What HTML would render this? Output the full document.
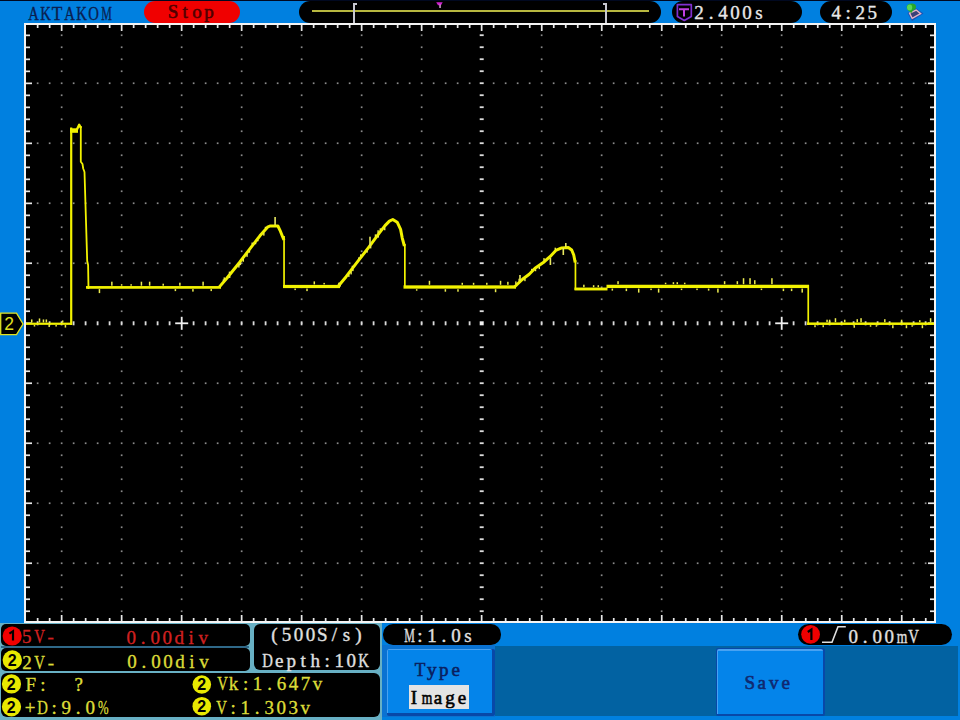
<!DOCTYPE html>
<html><head><meta charset="utf-8">
<style>
html,body{margin:0;padding:0;}
body{width:960px;height:720px;overflow:hidden;position:relative;background:#0080e0;font-family:"Liberation Mono",monospace;}
.a{position:absolute;}
.t{position:absolute;white-space:pre;font-family:"Liberation Serif",serif;font-size:19px;line-height:20px;}
.t span{display:inline-block;width:12px;text-align:center;}
.t{-webkit-text-stroke:0.35px currentColor;}
#stop,#type,#image,#save{-webkit-text-stroke:0.6px currentColor;}
.b{font-weight:bold;}
.pill{position:absolute;background:#000;border-radius:11px;}
</style></head><body>
<div class="a" style="left:0;top:0;width:960px;height:1px;background:#000820"></div>
<div class="pill" style="left:144px;top:1px;width:96px;height:21.5px;background:#f00000"></div>
<div class="pill" style="left:299px;top:1px;width:362px;height:21.5px"></div>
<div class="a" style="left:312px;top:10px;width:337px;height:2px;background:#b8b840"></div>
<div class="a" style="left:353px;top:2.5px;width:2.4px;height:20.5px;background:#c8c8d0"></div>
<div class="a" style="left:353px;top:2.5px;width:3.7px;height:2px;background:#c8c8d0"></div>
<div class="a" style="left:604.7px;top:2.5px;width:2.4px;height:20.5px;background:#c8c8d0"></div>
<div class="a" style="left:603.3px;top:2.5px;width:3.8px;height:2px;background:#c8c8d0"></div>
<svg class="a" style="left:434px;top:1px" width="12" height="8"><path d="M2.2,1.2 H8.7 L7,4.2 H4 Z" fill="#d020d0"/><rect x="5.3" y="3.5" width="1.5" height="3.5" fill="#d0a0d0"/></svg>
<div class="pill" style="left:672px;top:1px;width:130px;height:21.5px"></div>
<svg class="a" style="left:674px;top:2px" width="20" height="20"><path d="M3.4,2.6 H17.3 V14.5 L10.3,18.5 L3.4,14.5 Z" fill="none" stroke="#8030d0" stroke-width="1.7" stroke-linejoin="round"/><path d="M5,7.3 H15 M10,7.3 V14.5" stroke="#c040e0" stroke-width="2" fill="none"/></svg>
<div class="pill" style="left:820px;top:1px;width:72px;height:21.5px"></div>
<svg class="a" style="left:900px;top:0" width="26" height="22"><path d="M7.5,13 L16,8.2 L23.5,13.5 L12,21 Z" fill="#1a52b4"/><path d="M9.6,13.2 L16.2,10 L20.6,13.6 L12.2,18.4 Z" fill="#3a4078" stroke="#e4b4c4" stroke-width="1.4"/><path d="M6.6,6.5 Q8,3.2 12.5,3.6 Q16.5,4.2 16,7.8 Q15.5,10 12.8,10.8 L11.2,13.2 L9.4,11.2 Q6.4,9.6 6.6,6.5 Z" fill="#28a828"/><ellipse cx="9.6" cy="7.6" rx="2.6" ry="3" fill="#58d858"/></svg>

<div class="a" style="left:24px;top:23px;width:912px;height:600px;background:#f4f4f4"></div>
<div class="a" style="left:26px;top:25px;width:908px;height:596px;background:#000"></div>
<svg class="a" style="left:0;top:0" width="960" height="720" viewBox="0 0 960 720">
<rect x="60.8" y="34.4" width="1.7" height="1.7" fill="#8a8a8a"/>
<rect x="60.8" y="46.4" width="1.7" height="1.7" fill="#8a8a8a"/>
<rect x="60.8" y="58.4" width="1.7" height="1.7" fill="#8a8a8a"/>
<rect x="60.8" y="70.4" width="1.7" height="1.7" fill="#8a8a8a"/>
<rect x="60.8" y="82.4" width="1.7" height="1.7" fill="#8a8a8a"/>
<rect x="60.8" y="94.4" width="1.7" height="1.7" fill="#8a8a8a"/>
<rect x="60.8" y="106.4" width="1.7" height="1.7" fill="#8a8a8a"/>
<rect x="60.8" y="118.4" width="1.7" height="1.7" fill="#8a8a8a"/>
<rect x="60.8" y="130.4" width="1.7" height="1.7" fill="#8a8a8a"/>
<rect x="60.8" y="142.4" width="1.7" height="1.7" fill="#8a8a8a"/>
<rect x="60.8" y="154.4" width="1.7" height="1.7" fill="#8a8a8a"/>
<rect x="60.8" y="166.4" width="1.7" height="1.7" fill="#8a8a8a"/>
<rect x="60.8" y="178.4" width="1.7" height="1.7" fill="#8a8a8a"/>
<rect x="60.8" y="190.4" width="1.7" height="1.7" fill="#8a8a8a"/>
<rect x="60.8" y="202.4" width="1.7" height="1.7" fill="#8a8a8a"/>
<rect x="60.8" y="214.4" width="1.7" height="1.7" fill="#8a8a8a"/>
<rect x="60.8" y="226.4" width="1.7" height="1.7" fill="#8a8a8a"/>
<rect x="60.8" y="238.4" width="1.7" height="1.7" fill="#8a8a8a"/>
<rect x="60.8" y="250.4" width="1.7" height="1.7" fill="#8a8a8a"/>
<rect x="60.8" y="262.4" width="1.7" height="1.7" fill="#8a8a8a"/>
<rect x="60.8" y="274.4" width="1.7" height="1.7" fill="#8a8a8a"/>
<rect x="60.8" y="286.4" width="1.7" height="1.7" fill="#8a8a8a"/>
<rect x="60.8" y="298.4" width="1.7" height="1.7" fill="#8a8a8a"/>
<rect x="60.8" y="310.4" width="1.7" height="1.7" fill="#8a8a8a"/>
<rect x="60.8" y="322.4" width="1.7" height="1.7" fill="#8a8a8a"/>
<rect x="60.8" y="334.4" width="1.7" height="1.7" fill="#8a8a8a"/>
<rect x="60.8" y="346.4" width="1.7" height="1.7" fill="#8a8a8a"/>
<rect x="60.8" y="358.4" width="1.7" height="1.7" fill="#8a8a8a"/>
<rect x="60.8" y="370.4" width="1.7" height="1.7" fill="#8a8a8a"/>
<rect x="60.8" y="382.4" width="1.7" height="1.7" fill="#8a8a8a"/>
<rect x="60.8" y="394.4" width="1.7" height="1.7" fill="#8a8a8a"/>
<rect x="60.8" y="406.4" width="1.7" height="1.7" fill="#8a8a8a"/>
<rect x="60.8" y="418.4" width="1.7" height="1.7" fill="#8a8a8a"/>
<rect x="60.8" y="430.4" width="1.7" height="1.7" fill="#8a8a8a"/>
<rect x="60.8" y="442.4" width="1.7" height="1.7" fill="#8a8a8a"/>
<rect x="60.8" y="454.4" width="1.7" height="1.7" fill="#8a8a8a"/>
<rect x="60.8" y="466.4" width="1.7" height="1.7" fill="#8a8a8a"/>
<rect x="60.8" y="478.4" width="1.7" height="1.7" fill="#8a8a8a"/>
<rect x="60.8" y="490.4" width="1.7" height="1.7" fill="#8a8a8a"/>
<rect x="60.8" y="502.4" width="1.7" height="1.7" fill="#8a8a8a"/>
<rect x="60.8" y="514.4" width="1.7" height="1.7" fill="#8a8a8a"/>
<rect x="60.8" y="526.4" width="1.7" height="1.7" fill="#8a8a8a"/>
<rect x="60.8" y="538.4" width="1.7" height="1.7" fill="#8a8a8a"/>
<rect x="60.8" y="550.4" width="1.7" height="1.7" fill="#8a8a8a"/>
<rect x="60.8" y="562.4" width="1.7" height="1.7" fill="#8a8a8a"/>
<rect x="60.8" y="574.4" width="1.7" height="1.7" fill="#8a8a8a"/>
<rect x="60.8" y="586.4" width="1.7" height="1.7" fill="#8a8a8a"/>
<rect x="60.8" y="598.4" width="1.7" height="1.7" fill="#8a8a8a"/>
<rect x="60.8" y="610.4" width="1.7" height="1.7" fill="#8a8a8a"/>
<rect x="120.8" y="34.4" width="1.7" height="1.7" fill="#8a8a8a"/>
<rect x="120.8" y="46.4" width="1.7" height="1.7" fill="#8a8a8a"/>
<rect x="120.8" y="58.4" width="1.7" height="1.7" fill="#8a8a8a"/>
<rect x="120.8" y="70.4" width="1.7" height="1.7" fill="#8a8a8a"/>
<rect x="120.8" y="82.4" width="1.7" height="1.7" fill="#8a8a8a"/>
<rect x="120.8" y="94.4" width="1.7" height="1.7" fill="#8a8a8a"/>
<rect x="120.8" y="106.4" width="1.7" height="1.7" fill="#8a8a8a"/>
<rect x="120.8" y="118.4" width="1.7" height="1.7" fill="#8a8a8a"/>
<rect x="120.8" y="130.4" width="1.7" height="1.7" fill="#8a8a8a"/>
<rect x="120.8" y="142.4" width="1.7" height="1.7" fill="#8a8a8a"/>
<rect x="120.8" y="154.4" width="1.7" height="1.7" fill="#8a8a8a"/>
<rect x="120.8" y="166.4" width="1.7" height="1.7" fill="#8a8a8a"/>
<rect x="120.8" y="178.4" width="1.7" height="1.7" fill="#8a8a8a"/>
<rect x="120.8" y="190.4" width="1.7" height="1.7" fill="#8a8a8a"/>
<rect x="120.8" y="202.4" width="1.7" height="1.7" fill="#8a8a8a"/>
<rect x="120.8" y="214.4" width="1.7" height="1.7" fill="#8a8a8a"/>
<rect x="120.8" y="226.4" width="1.7" height="1.7" fill="#8a8a8a"/>
<rect x="120.8" y="238.4" width="1.7" height="1.7" fill="#8a8a8a"/>
<rect x="120.8" y="250.4" width="1.7" height="1.7" fill="#8a8a8a"/>
<rect x="120.8" y="262.4" width="1.7" height="1.7" fill="#8a8a8a"/>
<rect x="120.8" y="274.4" width="1.7" height="1.7" fill="#8a8a8a"/>
<rect x="120.8" y="286.4" width="1.7" height="1.7" fill="#8a8a8a"/>
<rect x="120.8" y="298.4" width="1.7" height="1.7" fill="#8a8a8a"/>
<rect x="120.8" y="310.4" width="1.7" height="1.7" fill="#8a8a8a"/>
<rect x="120.8" y="322.4" width="1.7" height="1.7" fill="#8a8a8a"/>
<rect x="120.8" y="334.4" width="1.7" height="1.7" fill="#8a8a8a"/>
<rect x="120.8" y="346.4" width="1.7" height="1.7" fill="#8a8a8a"/>
<rect x="120.8" y="358.4" width="1.7" height="1.7" fill="#8a8a8a"/>
<rect x="120.8" y="370.4" width="1.7" height="1.7" fill="#8a8a8a"/>
<rect x="120.8" y="382.4" width="1.7" height="1.7" fill="#8a8a8a"/>
<rect x="120.8" y="394.4" width="1.7" height="1.7" fill="#8a8a8a"/>
<rect x="120.8" y="406.4" width="1.7" height="1.7" fill="#8a8a8a"/>
<rect x="120.8" y="418.4" width="1.7" height="1.7" fill="#8a8a8a"/>
<rect x="120.8" y="430.4" width="1.7" height="1.7" fill="#8a8a8a"/>
<rect x="120.8" y="442.4" width="1.7" height="1.7" fill="#8a8a8a"/>
<rect x="120.8" y="454.4" width="1.7" height="1.7" fill="#8a8a8a"/>
<rect x="120.8" y="466.4" width="1.7" height="1.7" fill="#8a8a8a"/>
<rect x="120.8" y="478.4" width="1.7" height="1.7" fill="#8a8a8a"/>
<rect x="120.8" y="490.4" width="1.7" height="1.7" fill="#8a8a8a"/>
<rect x="120.8" y="502.4" width="1.7" height="1.7" fill="#8a8a8a"/>
<rect x="120.8" y="514.4" width="1.7" height="1.7" fill="#8a8a8a"/>
<rect x="120.8" y="526.4" width="1.7" height="1.7" fill="#8a8a8a"/>
<rect x="120.8" y="538.4" width="1.7" height="1.7" fill="#8a8a8a"/>
<rect x="120.8" y="550.4" width="1.7" height="1.7" fill="#8a8a8a"/>
<rect x="120.8" y="562.4" width="1.7" height="1.7" fill="#8a8a8a"/>
<rect x="120.8" y="574.4" width="1.7" height="1.7" fill="#8a8a8a"/>
<rect x="120.8" y="586.4" width="1.7" height="1.7" fill="#8a8a8a"/>
<rect x="120.8" y="598.4" width="1.7" height="1.7" fill="#8a8a8a"/>
<rect x="120.8" y="610.4" width="1.7" height="1.7" fill="#8a8a8a"/>
<rect x="180.8" y="34.4" width="1.7" height="1.7" fill="#8a8a8a"/>
<rect x="180.8" y="46.4" width="1.7" height="1.7" fill="#8a8a8a"/>
<rect x="180.8" y="58.4" width="1.7" height="1.7" fill="#8a8a8a"/>
<rect x="180.8" y="70.4" width="1.7" height="1.7" fill="#8a8a8a"/>
<rect x="180.8" y="82.4" width="1.7" height="1.7" fill="#8a8a8a"/>
<rect x="180.8" y="94.4" width="1.7" height="1.7" fill="#8a8a8a"/>
<rect x="180.8" y="106.4" width="1.7" height="1.7" fill="#8a8a8a"/>
<rect x="180.8" y="118.4" width="1.7" height="1.7" fill="#8a8a8a"/>
<rect x="180.8" y="130.4" width="1.7" height="1.7" fill="#8a8a8a"/>
<rect x="180.8" y="142.4" width="1.7" height="1.7" fill="#8a8a8a"/>
<rect x="180.8" y="154.4" width="1.7" height="1.7" fill="#8a8a8a"/>
<rect x="180.8" y="166.4" width="1.7" height="1.7" fill="#8a8a8a"/>
<rect x="180.8" y="178.4" width="1.7" height="1.7" fill="#8a8a8a"/>
<rect x="180.8" y="190.4" width="1.7" height="1.7" fill="#8a8a8a"/>
<rect x="180.8" y="202.4" width="1.7" height="1.7" fill="#8a8a8a"/>
<rect x="180.8" y="214.4" width="1.7" height="1.7" fill="#8a8a8a"/>
<rect x="180.8" y="226.4" width="1.7" height="1.7" fill="#8a8a8a"/>
<rect x="180.8" y="238.4" width="1.7" height="1.7" fill="#8a8a8a"/>
<rect x="180.8" y="250.4" width="1.7" height="1.7" fill="#8a8a8a"/>
<rect x="180.8" y="262.4" width="1.7" height="1.7" fill="#8a8a8a"/>
<rect x="180.8" y="274.4" width="1.7" height="1.7" fill="#8a8a8a"/>
<rect x="180.8" y="286.4" width="1.7" height="1.7" fill="#8a8a8a"/>
<rect x="180.8" y="298.4" width="1.7" height="1.7" fill="#8a8a8a"/>
<rect x="180.8" y="310.4" width="1.7" height="1.7" fill="#8a8a8a"/>
<rect x="180.8" y="322.4" width="1.7" height="1.7" fill="#8a8a8a"/>
<rect x="180.8" y="334.4" width="1.7" height="1.7" fill="#8a8a8a"/>
<rect x="180.8" y="346.4" width="1.7" height="1.7" fill="#8a8a8a"/>
<rect x="180.8" y="358.4" width="1.7" height="1.7" fill="#8a8a8a"/>
<rect x="180.8" y="370.4" width="1.7" height="1.7" fill="#8a8a8a"/>
<rect x="180.8" y="382.4" width="1.7" height="1.7" fill="#8a8a8a"/>
<rect x="180.8" y="394.4" width="1.7" height="1.7" fill="#8a8a8a"/>
<rect x="180.8" y="406.4" width="1.7" height="1.7" fill="#8a8a8a"/>
<rect x="180.8" y="418.4" width="1.7" height="1.7" fill="#8a8a8a"/>
<rect x="180.8" y="430.4" width="1.7" height="1.7" fill="#8a8a8a"/>
<rect x="180.8" y="442.4" width="1.7" height="1.7" fill="#8a8a8a"/>
<rect x="180.8" y="454.4" width="1.7" height="1.7" fill="#8a8a8a"/>
<rect x="180.8" y="466.4" width="1.7" height="1.7" fill="#8a8a8a"/>
<rect x="180.8" y="478.4" width="1.7" height="1.7" fill="#8a8a8a"/>
<rect x="180.8" y="490.4" width="1.7" height="1.7" fill="#8a8a8a"/>
<rect x="180.8" y="502.4" width="1.7" height="1.7" fill="#8a8a8a"/>
<rect x="180.8" y="514.4" width="1.7" height="1.7" fill="#8a8a8a"/>
<rect x="180.8" y="526.4" width="1.7" height="1.7" fill="#8a8a8a"/>
<rect x="180.8" y="538.4" width="1.7" height="1.7" fill="#8a8a8a"/>
<rect x="180.8" y="550.4" width="1.7" height="1.7" fill="#8a8a8a"/>
<rect x="180.8" y="562.4" width="1.7" height="1.7" fill="#8a8a8a"/>
<rect x="180.8" y="574.4" width="1.7" height="1.7" fill="#8a8a8a"/>
<rect x="180.8" y="586.4" width="1.7" height="1.7" fill="#8a8a8a"/>
<rect x="180.8" y="598.4" width="1.7" height="1.7" fill="#8a8a8a"/>
<rect x="180.8" y="610.4" width="1.7" height="1.7" fill="#8a8a8a"/>
<rect x="240.8" y="34.4" width="1.7" height="1.7" fill="#8a8a8a"/>
<rect x="240.8" y="46.4" width="1.7" height="1.7" fill="#8a8a8a"/>
<rect x="240.8" y="58.4" width="1.7" height="1.7" fill="#8a8a8a"/>
<rect x="240.8" y="70.4" width="1.7" height="1.7" fill="#8a8a8a"/>
<rect x="240.8" y="82.4" width="1.7" height="1.7" fill="#8a8a8a"/>
<rect x="240.8" y="94.4" width="1.7" height="1.7" fill="#8a8a8a"/>
<rect x="240.8" y="106.4" width="1.7" height="1.7" fill="#8a8a8a"/>
<rect x="240.8" y="118.4" width="1.7" height="1.7" fill="#8a8a8a"/>
<rect x="240.8" y="130.4" width="1.7" height="1.7" fill="#8a8a8a"/>
<rect x="240.8" y="142.4" width="1.7" height="1.7" fill="#8a8a8a"/>
<rect x="240.8" y="154.4" width="1.7" height="1.7" fill="#8a8a8a"/>
<rect x="240.8" y="166.4" width="1.7" height="1.7" fill="#8a8a8a"/>
<rect x="240.8" y="178.4" width="1.7" height="1.7" fill="#8a8a8a"/>
<rect x="240.8" y="190.4" width="1.7" height="1.7" fill="#8a8a8a"/>
<rect x="240.8" y="202.4" width="1.7" height="1.7" fill="#8a8a8a"/>
<rect x="240.8" y="214.4" width="1.7" height="1.7" fill="#8a8a8a"/>
<rect x="240.8" y="226.4" width="1.7" height="1.7" fill="#8a8a8a"/>
<rect x="240.8" y="238.4" width="1.7" height="1.7" fill="#8a8a8a"/>
<rect x="240.8" y="250.4" width="1.7" height="1.7" fill="#8a8a8a"/>
<rect x="240.8" y="262.4" width="1.7" height="1.7" fill="#8a8a8a"/>
<rect x="240.8" y="274.4" width="1.7" height="1.7" fill="#8a8a8a"/>
<rect x="240.8" y="286.4" width="1.7" height="1.7" fill="#8a8a8a"/>
<rect x="240.8" y="298.4" width="1.7" height="1.7" fill="#8a8a8a"/>
<rect x="240.8" y="310.4" width="1.7" height="1.7" fill="#8a8a8a"/>
<rect x="240.8" y="322.4" width="1.7" height="1.7" fill="#8a8a8a"/>
<rect x="240.8" y="334.4" width="1.7" height="1.7" fill="#8a8a8a"/>
<rect x="240.8" y="346.4" width="1.7" height="1.7" fill="#8a8a8a"/>
<rect x="240.8" y="358.4" width="1.7" height="1.7" fill="#8a8a8a"/>
<rect x="240.8" y="370.4" width="1.7" height="1.7" fill="#8a8a8a"/>
<rect x="240.8" y="382.4" width="1.7" height="1.7" fill="#8a8a8a"/>
<rect x="240.8" y="394.4" width="1.7" height="1.7" fill="#8a8a8a"/>
<rect x="240.8" y="406.4" width="1.7" height="1.7" fill="#8a8a8a"/>
<rect x="240.8" y="418.4" width="1.7" height="1.7" fill="#8a8a8a"/>
<rect x="240.8" y="430.4" width="1.7" height="1.7" fill="#8a8a8a"/>
<rect x="240.8" y="442.4" width="1.7" height="1.7" fill="#8a8a8a"/>
<rect x="240.8" y="454.4" width="1.7" height="1.7" fill="#8a8a8a"/>
<rect x="240.8" y="466.4" width="1.7" height="1.7" fill="#8a8a8a"/>
<rect x="240.8" y="478.4" width="1.7" height="1.7" fill="#8a8a8a"/>
<rect x="240.8" y="490.4" width="1.7" height="1.7" fill="#8a8a8a"/>
<rect x="240.8" y="502.4" width="1.7" height="1.7" fill="#8a8a8a"/>
<rect x="240.8" y="514.4" width="1.7" height="1.7" fill="#8a8a8a"/>
<rect x="240.8" y="526.4" width="1.7" height="1.7" fill="#8a8a8a"/>
<rect x="240.8" y="538.4" width="1.7" height="1.7" fill="#8a8a8a"/>
<rect x="240.8" y="550.4" width="1.7" height="1.7" fill="#8a8a8a"/>
<rect x="240.8" y="562.4" width="1.7" height="1.7" fill="#8a8a8a"/>
<rect x="240.8" y="574.4" width="1.7" height="1.7" fill="#8a8a8a"/>
<rect x="240.8" y="586.4" width="1.7" height="1.7" fill="#8a8a8a"/>
<rect x="240.8" y="598.4" width="1.7" height="1.7" fill="#8a8a8a"/>
<rect x="240.8" y="610.4" width="1.7" height="1.7" fill="#8a8a8a"/>
<rect x="300.8" y="34.4" width="1.7" height="1.7" fill="#8a8a8a"/>
<rect x="300.8" y="46.4" width="1.7" height="1.7" fill="#8a8a8a"/>
<rect x="300.8" y="58.4" width="1.7" height="1.7" fill="#8a8a8a"/>
<rect x="300.8" y="70.4" width="1.7" height="1.7" fill="#8a8a8a"/>
<rect x="300.8" y="82.4" width="1.7" height="1.7" fill="#8a8a8a"/>
<rect x="300.8" y="94.4" width="1.7" height="1.7" fill="#8a8a8a"/>
<rect x="300.8" y="106.4" width="1.7" height="1.7" fill="#8a8a8a"/>
<rect x="300.8" y="118.4" width="1.7" height="1.7" fill="#8a8a8a"/>
<rect x="300.8" y="130.4" width="1.7" height="1.7" fill="#8a8a8a"/>
<rect x="300.8" y="142.4" width="1.7" height="1.7" fill="#8a8a8a"/>
<rect x="300.8" y="154.4" width="1.7" height="1.7" fill="#8a8a8a"/>
<rect x="300.8" y="166.4" width="1.7" height="1.7" fill="#8a8a8a"/>
<rect x="300.8" y="178.4" width="1.7" height="1.7" fill="#8a8a8a"/>
<rect x="300.8" y="190.4" width="1.7" height="1.7" fill="#8a8a8a"/>
<rect x="300.8" y="202.4" width="1.7" height="1.7" fill="#8a8a8a"/>
<rect x="300.8" y="214.4" width="1.7" height="1.7" fill="#8a8a8a"/>
<rect x="300.8" y="226.4" width="1.7" height="1.7" fill="#8a8a8a"/>
<rect x="300.8" y="238.4" width="1.7" height="1.7" fill="#8a8a8a"/>
<rect x="300.8" y="250.4" width="1.7" height="1.7" fill="#8a8a8a"/>
<rect x="300.8" y="262.4" width="1.7" height="1.7" fill="#8a8a8a"/>
<rect x="300.8" y="274.4" width="1.7" height="1.7" fill="#8a8a8a"/>
<rect x="300.8" y="286.4" width="1.7" height="1.7" fill="#8a8a8a"/>
<rect x="300.8" y="298.4" width="1.7" height="1.7" fill="#8a8a8a"/>
<rect x="300.8" y="310.4" width="1.7" height="1.7" fill="#8a8a8a"/>
<rect x="300.8" y="322.4" width="1.7" height="1.7" fill="#8a8a8a"/>
<rect x="300.8" y="334.4" width="1.7" height="1.7" fill="#8a8a8a"/>
<rect x="300.8" y="346.4" width="1.7" height="1.7" fill="#8a8a8a"/>
<rect x="300.8" y="358.4" width="1.7" height="1.7" fill="#8a8a8a"/>
<rect x="300.8" y="370.4" width="1.7" height="1.7" fill="#8a8a8a"/>
<rect x="300.8" y="382.4" width="1.7" height="1.7" fill="#8a8a8a"/>
<rect x="300.8" y="394.4" width="1.7" height="1.7" fill="#8a8a8a"/>
<rect x="300.8" y="406.4" width="1.7" height="1.7" fill="#8a8a8a"/>
<rect x="300.8" y="418.4" width="1.7" height="1.7" fill="#8a8a8a"/>
<rect x="300.8" y="430.4" width="1.7" height="1.7" fill="#8a8a8a"/>
<rect x="300.8" y="442.4" width="1.7" height="1.7" fill="#8a8a8a"/>
<rect x="300.8" y="454.4" width="1.7" height="1.7" fill="#8a8a8a"/>
<rect x="300.8" y="466.4" width="1.7" height="1.7" fill="#8a8a8a"/>
<rect x="300.8" y="478.4" width="1.7" height="1.7" fill="#8a8a8a"/>
<rect x="300.8" y="490.4" width="1.7" height="1.7" fill="#8a8a8a"/>
<rect x="300.8" y="502.4" width="1.7" height="1.7" fill="#8a8a8a"/>
<rect x="300.8" y="514.4" width="1.7" height="1.7" fill="#8a8a8a"/>
<rect x="300.8" y="526.4" width="1.7" height="1.7" fill="#8a8a8a"/>
<rect x="300.8" y="538.4" width="1.7" height="1.7" fill="#8a8a8a"/>
<rect x="300.8" y="550.4" width="1.7" height="1.7" fill="#8a8a8a"/>
<rect x="300.8" y="562.4" width="1.7" height="1.7" fill="#8a8a8a"/>
<rect x="300.8" y="574.4" width="1.7" height="1.7" fill="#8a8a8a"/>
<rect x="300.8" y="586.4" width="1.7" height="1.7" fill="#8a8a8a"/>
<rect x="300.8" y="598.4" width="1.7" height="1.7" fill="#8a8a8a"/>
<rect x="300.8" y="610.4" width="1.7" height="1.7" fill="#8a8a8a"/>
<rect x="360.8" y="34.4" width="1.7" height="1.7" fill="#8a8a8a"/>
<rect x="360.8" y="46.4" width="1.7" height="1.7" fill="#8a8a8a"/>
<rect x="360.8" y="58.4" width="1.7" height="1.7" fill="#8a8a8a"/>
<rect x="360.8" y="70.4" width="1.7" height="1.7" fill="#8a8a8a"/>
<rect x="360.8" y="82.4" width="1.7" height="1.7" fill="#8a8a8a"/>
<rect x="360.8" y="94.4" width="1.7" height="1.7" fill="#8a8a8a"/>
<rect x="360.8" y="106.4" width="1.7" height="1.7" fill="#8a8a8a"/>
<rect x="360.8" y="118.4" width="1.7" height="1.7" fill="#8a8a8a"/>
<rect x="360.8" y="130.4" width="1.7" height="1.7" fill="#8a8a8a"/>
<rect x="360.8" y="142.4" width="1.7" height="1.7" fill="#8a8a8a"/>
<rect x="360.8" y="154.4" width="1.7" height="1.7" fill="#8a8a8a"/>
<rect x="360.8" y="166.4" width="1.7" height="1.7" fill="#8a8a8a"/>
<rect x="360.8" y="178.4" width="1.7" height="1.7" fill="#8a8a8a"/>
<rect x="360.8" y="190.4" width="1.7" height="1.7" fill="#8a8a8a"/>
<rect x="360.8" y="202.4" width="1.7" height="1.7" fill="#8a8a8a"/>
<rect x="360.8" y="214.4" width="1.7" height="1.7" fill="#8a8a8a"/>
<rect x="360.8" y="226.4" width="1.7" height="1.7" fill="#8a8a8a"/>
<rect x="360.8" y="238.4" width="1.7" height="1.7" fill="#8a8a8a"/>
<rect x="360.8" y="250.4" width="1.7" height="1.7" fill="#8a8a8a"/>
<rect x="360.8" y="262.4" width="1.7" height="1.7" fill="#8a8a8a"/>
<rect x="360.8" y="274.4" width="1.7" height="1.7" fill="#8a8a8a"/>
<rect x="360.8" y="286.4" width="1.7" height="1.7" fill="#8a8a8a"/>
<rect x="360.8" y="298.4" width="1.7" height="1.7" fill="#8a8a8a"/>
<rect x="360.8" y="310.4" width="1.7" height="1.7" fill="#8a8a8a"/>
<rect x="360.8" y="322.4" width="1.7" height="1.7" fill="#8a8a8a"/>
<rect x="360.8" y="334.4" width="1.7" height="1.7" fill="#8a8a8a"/>
<rect x="360.8" y="346.4" width="1.7" height="1.7" fill="#8a8a8a"/>
<rect x="360.8" y="358.4" width="1.7" height="1.7" fill="#8a8a8a"/>
<rect x="360.8" y="370.4" width="1.7" height="1.7" fill="#8a8a8a"/>
<rect x="360.8" y="382.4" width="1.7" height="1.7" fill="#8a8a8a"/>
<rect x="360.8" y="394.4" width="1.7" height="1.7" fill="#8a8a8a"/>
<rect x="360.8" y="406.4" width="1.7" height="1.7" fill="#8a8a8a"/>
<rect x="360.8" y="418.4" width="1.7" height="1.7" fill="#8a8a8a"/>
<rect x="360.8" y="430.4" width="1.7" height="1.7" fill="#8a8a8a"/>
<rect x="360.8" y="442.4" width="1.7" height="1.7" fill="#8a8a8a"/>
<rect x="360.8" y="454.4" width="1.7" height="1.7" fill="#8a8a8a"/>
<rect x="360.8" y="466.4" width="1.7" height="1.7" fill="#8a8a8a"/>
<rect x="360.8" y="478.4" width="1.7" height="1.7" fill="#8a8a8a"/>
<rect x="360.8" y="490.4" width="1.7" height="1.7" fill="#8a8a8a"/>
<rect x="360.8" y="502.4" width="1.7" height="1.7" fill="#8a8a8a"/>
<rect x="360.8" y="514.4" width="1.7" height="1.7" fill="#8a8a8a"/>
<rect x="360.8" y="526.4" width="1.7" height="1.7" fill="#8a8a8a"/>
<rect x="360.8" y="538.4" width="1.7" height="1.7" fill="#8a8a8a"/>
<rect x="360.8" y="550.4" width="1.7" height="1.7" fill="#8a8a8a"/>
<rect x="360.8" y="562.4" width="1.7" height="1.7" fill="#8a8a8a"/>
<rect x="360.8" y="574.4" width="1.7" height="1.7" fill="#8a8a8a"/>
<rect x="360.8" y="586.4" width="1.7" height="1.7" fill="#8a8a8a"/>
<rect x="360.8" y="598.4" width="1.7" height="1.7" fill="#8a8a8a"/>
<rect x="360.8" y="610.4" width="1.7" height="1.7" fill="#8a8a8a"/>
<rect x="420.8" y="34.4" width="1.7" height="1.7" fill="#8a8a8a"/>
<rect x="420.8" y="46.4" width="1.7" height="1.7" fill="#8a8a8a"/>
<rect x="420.8" y="58.4" width="1.7" height="1.7" fill="#8a8a8a"/>
<rect x="420.8" y="70.4" width="1.7" height="1.7" fill="#8a8a8a"/>
<rect x="420.8" y="82.4" width="1.7" height="1.7" fill="#8a8a8a"/>
<rect x="420.8" y="94.4" width="1.7" height="1.7" fill="#8a8a8a"/>
<rect x="420.8" y="106.4" width="1.7" height="1.7" fill="#8a8a8a"/>
<rect x="420.8" y="118.4" width="1.7" height="1.7" fill="#8a8a8a"/>
<rect x="420.8" y="130.4" width="1.7" height="1.7" fill="#8a8a8a"/>
<rect x="420.8" y="142.4" width="1.7" height="1.7" fill="#8a8a8a"/>
<rect x="420.8" y="154.4" width="1.7" height="1.7" fill="#8a8a8a"/>
<rect x="420.8" y="166.4" width="1.7" height="1.7" fill="#8a8a8a"/>
<rect x="420.8" y="178.4" width="1.7" height="1.7" fill="#8a8a8a"/>
<rect x="420.8" y="190.4" width="1.7" height="1.7" fill="#8a8a8a"/>
<rect x="420.8" y="202.4" width="1.7" height="1.7" fill="#8a8a8a"/>
<rect x="420.8" y="214.4" width="1.7" height="1.7" fill="#8a8a8a"/>
<rect x="420.8" y="226.4" width="1.7" height="1.7" fill="#8a8a8a"/>
<rect x="420.8" y="238.4" width="1.7" height="1.7" fill="#8a8a8a"/>
<rect x="420.8" y="250.4" width="1.7" height="1.7" fill="#8a8a8a"/>
<rect x="420.8" y="262.4" width="1.7" height="1.7" fill="#8a8a8a"/>
<rect x="420.8" y="274.4" width="1.7" height="1.7" fill="#8a8a8a"/>
<rect x="420.8" y="286.4" width="1.7" height="1.7" fill="#8a8a8a"/>
<rect x="420.8" y="298.4" width="1.7" height="1.7" fill="#8a8a8a"/>
<rect x="420.8" y="310.4" width="1.7" height="1.7" fill="#8a8a8a"/>
<rect x="420.8" y="322.4" width="1.7" height="1.7" fill="#8a8a8a"/>
<rect x="420.8" y="334.4" width="1.7" height="1.7" fill="#8a8a8a"/>
<rect x="420.8" y="346.4" width="1.7" height="1.7" fill="#8a8a8a"/>
<rect x="420.8" y="358.4" width="1.7" height="1.7" fill="#8a8a8a"/>
<rect x="420.8" y="370.4" width="1.7" height="1.7" fill="#8a8a8a"/>
<rect x="420.8" y="382.4" width="1.7" height="1.7" fill="#8a8a8a"/>
<rect x="420.8" y="394.4" width="1.7" height="1.7" fill="#8a8a8a"/>
<rect x="420.8" y="406.4" width="1.7" height="1.7" fill="#8a8a8a"/>
<rect x="420.8" y="418.4" width="1.7" height="1.7" fill="#8a8a8a"/>
<rect x="420.8" y="430.4" width="1.7" height="1.7" fill="#8a8a8a"/>
<rect x="420.8" y="442.4" width="1.7" height="1.7" fill="#8a8a8a"/>
<rect x="420.8" y="454.4" width="1.7" height="1.7" fill="#8a8a8a"/>
<rect x="420.8" y="466.4" width="1.7" height="1.7" fill="#8a8a8a"/>
<rect x="420.8" y="478.4" width="1.7" height="1.7" fill="#8a8a8a"/>
<rect x="420.8" y="490.4" width="1.7" height="1.7" fill="#8a8a8a"/>
<rect x="420.8" y="502.4" width="1.7" height="1.7" fill="#8a8a8a"/>
<rect x="420.8" y="514.4" width="1.7" height="1.7" fill="#8a8a8a"/>
<rect x="420.8" y="526.4" width="1.7" height="1.7" fill="#8a8a8a"/>
<rect x="420.8" y="538.4" width="1.7" height="1.7" fill="#8a8a8a"/>
<rect x="420.8" y="550.4" width="1.7" height="1.7" fill="#8a8a8a"/>
<rect x="420.8" y="562.4" width="1.7" height="1.7" fill="#8a8a8a"/>
<rect x="420.8" y="574.4" width="1.7" height="1.7" fill="#8a8a8a"/>
<rect x="420.8" y="586.4" width="1.7" height="1.7" fill="#8a8a8a"/>
<rect x="420.8" y="598.4" width="1.7" height="1.7" fill="#8a8a8a"/>
<rect x="420.8" y="610.4" width="1.7" height="1.7" fill="#8a8a8a"/>
<rect x="540.8" y="34.4" width="1.7" height="1.7" fill="#8a8a8a"/>
<rect x="540.8" y="46.4" width="1.7" height="1.7" fill="#8a8a8a"/>
<rect x="540.8" y="58.4" width="1.7" height="1.7" fill="#8a8a8a"/>
<rect x="540.8" y="70.4" width="1.7" height="1.7" fill="#8a8a8a"/>
<rect x="540.8" y="82.4" width="1.7" height="1.7" fill="#8a8a8a"/>
<rect x="540.8" y="94.4" width="1.7" height="1.7" fill="#8a8a8a"/>
<rect x="540.8" y="106.4" width="1.7" height="1.7" fill="#8a8a8a"/>
<rect x="540.8" y="118.4" width="1.7" height="1.7" fill="#8a8a8a"/>
<rect x="540.8" y="130.4" width="1.7" height="1.7" fill="#8a8a8a"/>
<rect x="540.8" y="142.4" width="1.7" height="1.7" fill="#8a8a8a"/>
<rect x="540.8" y="154.4" width="1.7" height="1.7" fill="#8a8a8a"/>
<rect x="540.8" y="166.4" width="1.7" height="1.7" fill="#8a8a8a"/>
<rect x="540.8" y="178.4" width="1.7" height="1.7" fill="#8a8a8a"/>
<rect x="540.8" y="190.4" width="1.7" height="1.7" fill="#8a8a8a"/>
<rect x="540.8" y="202.4" width="1.7" height="1.7" fill="#8a8a8a"/>
<rect x="540.8" y="214.4" width="1.7" height="1.7" fill="#8a8a8a"/>
<rect x="540.8" y="226.4" width="1.7" height="1.7" fill="#8a8a8a"/>
<rect x="540.8" y="238.4" width="1.7" height="1.7" fill="#8a8a8a"/>
<rect x="540.8" y="250.4" width="1.7" height="1.7" fill="#8a8a8a"/>
<rect x="540.8" y="262.4" width="1.7" height="1.7" fill="#8a8a8a"/>
<rect x="540.8" y="274.4" width="1.7" height="1.7" fill="#8a8a8a"/>
<rect x="540.8" y="286.4" width="1.7" height="1.7" fill="#8a8a8a"/>
<rect x="540.8" y="298.4" width="1.7" height="1.7" fill="#8a8a8a"/>
<rect x="540.8" y="310.4" width="1.7" height="1.7" fill="#8a8a8a"/>
<rect x="540.8" y="322.4" width="1.7" height="1.7" fill="#8a8a8a"/>
<rect x="540.8" y="334.4" width="1.7" height="1.7" fill="#8a8a8a"/>
<rect x="540.8" y="346.4" width="1.7" height="1.7" fill="#8a8a8a"/>
<rect x="540.8" y="358.4" width="1.7" height="1.7" fill="#8a8a8a"/>
<rect x="540.8" y="370.4" width="1.7" height="1.7" fill="#8a8a8a"/>
<rect x="540.8" y="382.4" width="1.7" height="1.7" fill="#8a8a8a"/>
<rect x="540.8" y="394.4" width="1.7" height="1.7" fill="#8a8a8a"/>
<rect x="540.8" y="406.4" width="1.7" height="1.7" fill="#8a8a8a"/>
<rect x="540.8" y="418.4" width="1.7" height="1.7" fill="#8a8a8a"/>
<rect x="540.8" y="430.4" width="1.7" height="1.7" fill="#8a8a8a"/>
<rect x="540.8" y="442.4" width="1.7" height="1.7" fill="#8a8a8a"/>
<rect x="540.8" y="454.4" width="1.7" height="1.7" fill="#8a8a8a"/>
<rect x="540.8" y="466.4" width="1.7" height="1.7" fill="#8a8a8a"/>
<rect x="540.8" y="478.4" width="1.7" height="1.7" fill="#8a8a8a"/>
<rect x="540.8" y="490.4" width="1.7" height="1.7" fill="#8a8a8a"/>
<rect x="540.8" y="502.4" width="1.7" height="1.7" fill="#8a8a8a"/>
<rect x="540.8" y="514.4" width="1.7" height="1.7" fill="#8a8a8a"/>
<rect x="540.8" y="526.4" width="1.7" height="1.7" fill="#8a8a8a"/>
<rect x="540.8" y="538.4" width="1.7" height="1.7" fill="#8a8a8a"/>
<rect x="540.8" y="550.4" width="1.7" height="1.7" fill="#8a8a8a"/>
<rect x="540.8" y="562.4" width="1.7" height="1.7" fill="#8a8a8a"/>
<rect x="540.8" y="574.4" width="1.7" height="1.7" fill="#8a8a8a"/>
<rect x="540.8" y="586.4" width="1.7" height="1.7" fill="#8a8a8a"/>
<rect x="540.8" y="598.4" width="1.7" height="1.7" fill="#8a8a8a"/>
<rect x="540.8" y="610.4" width="1.7" height="1.7" fill="#8a8a8a"/>
<rect x="600.8" y="34.4" width="1.7" height="1.7" fill="#8a8a8a"/>
<rect x="600.8" y="46.4" width="1.7" height="1.7" fill="#8a8a8a"/>
<rect x="600.8" y="58.4" width="1.7" height="1.7" fill="#8a8a8a"/>
<rect x="600.8" y="70.4" width="1.7" height="1.7" fill="#8a8a8a"/>
<rect x="600.8" y="82.4" width="1.7" height="1.7" fill="#8a8a8a"/>
<rect x="600.8" y="94.4" width="1.7" height="1.7" fill="#8a8a8a"/>
<rect x="600.8" y="106.4" width="1.7" height="1.7" fill="#8a8a8a"/>
<rect x="600.8" y="118.4" width="1.7" height="1.7" fill="#8a8a8a"/>
<rect x="600.8" y="130.4" width="1.7" height="1.7" fill="#8a8a8a"/>
<rect x="600.8" y="142.4" width="1.7" height="1.7" fill="#8a8a8a"/>
<rect x="600.8" y="154.4" width="1.7" height="1.7" fill="#8a8a8a"/>
<rect x="600.8" y="166.4" width="1.7" height="1.7" fill="#8a8a8a"/>
<rect x="600.8" y="178.4" width="1.7" height="1.7" fill="#8a8a8a"/>
<rect x="600.8" y="190.4" width="1.7" height="1.7" fill="#8a8a8a"/>
<rect x="600.8" y="202.4" width="1.7" height="1.7" fill="#8a8a8a"/>
<rect x="600.8" y="214.4" width="1.7" height="1.7" fill="#8a8a8a"/>
<rect x="600.8" y="226.4" width="1.7" height="1.7" fill="#8a8a8a"/>
<rect x="600.8" y="238.4" width="1.7" height="1.7" fill="#8a8a8a"/>
<rect x="600.8" y="250.4" width="1.7" height="1.7" fill="#8a8a8a"/>
<rect x="600.8" y="262.4" width="1.7" height="1.7" fill="#8a8a8a"/>
<rect x="600.8" y="274.4" width="1.7" height="1.7" fill="#8a8a8a"/>
<rect x="600.8" y="286.4" width="1.7" height="1.7" fill="#8a8a8a"/>
<rect x="600.8" y="298.4" width="1.7" height="1.7" fill="#8a8a8a"/>
<rect x="600.8" y="310.4" width="1.7" height="1.7" fill="#8a8a8a"/>
<rect x="600.8" y="322.4" width="1.7" height="1.7" fill="#8a8a8a"/>
<rect x="600.8" y="334.4" width="1.7" height="1.7" fill="#8a8a8a"/>
<rect x="600.8" y="346.4" width="1.7" height="1.7" fill="#8a8a8a"/>
<rect x="600.8" y="358.4" width="1.7" height="1.7" fill="#8a8a8a"/>
<rect x="600.8" y="370.4" width="1.7" height="1.7" fill="#8a8a8a"/>
<rect x="600.8" y="382.4" width="1.7" height="1.7" fill="#8a8a8a"/>
<rect x="600.8" y="394.4" width="1.7" height="1.7" fill="#8a8a8a"/>
<rect x="600.8" y="406.4" width="1.7" height="1.7" fill="#8a8a8a"/>
<rect x="600.8" y="418.4" width="1.7" height="1.7" fill="#8a8a8a"/>
<rect x="600.8" y="430.4" width="1.7" height="1.7" fill="#8a8a8a"/>
<rect x="600.8" y="442.4" width="1.7" height="1.7" fill="#8a8a8a"/>
<rect x="600.8" y="454.4" width="1.7" height="1.7" fill="#8a8a8a"/>
<rect x="600.8" y="466.4" width="1.7" height="1.7" fill="#8a8a8a"/>
<rect x="600.8" y="478.4" width="1.7" height="1.7" fill="#8a8a8a"/>
<rect x="600.8" y="490.4" width="1.7" height="1.7" fill="#8a8a8a"/>
<rect x="600.8" y="502.4" width="1.7" height="1.7" fill="#8a8a8a"/>
<rect x="600.8" y="514.4" width="1.7" height="1.7" fill="#8a8a8a"/>
<rect x="600.8" y="526.4" width="1.7" height="1.7" fill="#8a8a8a"/>
<rect x="600.8" y="538.4" width="1.7" height="1.7" fill="#8a8a8a"/>
<rect x="600.8" y="550.4" width="1.7" height="1.7" fill="#8a8a8a"/>
<rect x="600.8" y="562.4" width="1.7" height="1.7" fill="#8a8a8a"/>
<rect x="600.8" y="574.4" width="1.7" height="1.7" fill="#8a8a8a"/>
<rect x="600.8" y="586.4" width="1.7" height="1.7" fill="#8a8a8a"/>
<rect x="600.8" y="598.4" width="1.7" height="1.7" fill="#8a8a8a"/>
<rect x="600.8" y="610.4" width="1.7" height="1.7" fill="#8a8a8a"/>
<rect x="660.8" y="34.4" width="1.7" height="1.7" fill="#8a8a8a"/>
<rect x="660.8" y="46.4" width="1.7" height="1.7" fill="#8a8a8a"/>
<rect x="660.8" y="58.4" width="1.7" height="1.7" fill="#8a8a8a"/>
<rect x="660.8" y="70.4" width="1.7" height="1.7" fill="#8a8a8a"/>
<rect x="660.8" y="82.4" width="1.7" height="1.7" fill="#8a8a8a"/>
<rect x="660.8" y="94.4" width="1.7" height="1.7" fill="#8a8a8a"/>
<rect x="660.8" y="106.4" width="1.7" height="1.7" fill="#8a8a8a"/>
<rect x="660.8" y="118.4" width="1.7" height="1.7" fill="#8a8a8a"/>
<rect x="660.8" y="130.4" width="1.7" height="1.7" fill="#8a8a8a"/>
<rect x="660.8" y="142.4" width="1.7" height="1.7" fill="#8a8a8a"/>
<rect x="660.8" y="154.4" width="1.7" height="1.7" fill="#8a8a8a"/>
<rect x="660.8" y="166.4" width="1.7" height="1.7" fill="#8a8a8a"/>
<rect x="660.8" y="178.4" width="1.7" height="1.7" fill="#8a8a8a"/>
<rect x="660.8" y="190.4" width="1.7" height="1.7" fill="#8a8a8a"/>
<rect x="660.8" y="202.4" width="1.7" height="1.7" fill="#8a8a8a"/>
<rect x="660.8" y="214.4" width="1.7" height="1.7" fill="#8a8a8a"/>
<rect x="660.8" y="226.4" width="1.7" height="1.7" fill="#8a8a8a"/>
<rect x="660.8" y="238.4" width="1.7" height="1.7" fill="#8a8a8a"/>
<rect x="660.8" y="250.4" width="1.7" height="1.7" fill="#8a8a8a"/>
<rect x="660.8" y="262.4" width="1.7" height="1.7" fill="#8a8a8a"/>
<rect x="660.8" y="274.4" width="1.7" height="1.7" fill="#8a8a8a"/>
<rect x="660.8" y="286.4" width="1.7" height="1.7" fill="#8a8a8a"/>
<rect x="660.8" y="298.4" width="1.7" height="1.7" fill="#8a8a8a"/>
<rect x="660.8" y="310.4" width="1.7" height="1.7" fill="#8a8a8a"/>
<rect x="660.8" y="322.4" width="1.7" height="1.7" fill="#8a8a8a"/>
<rect x="660.8" y="334.4" width="1.7" height="1.7" fill="#8a8a8a"/>
<rect x="660.8" y="346.4" width="1.7" height="1.7" fill="#8a8a8a"/>
<rect x="660.8" y="358.4" width="1.7" height="1.7" fill="#8a8a8a"/>
<rect x="660.8" y="370.4" width="1.7" height="1.7" fill="#8a8a8a"/>
<rect x="660.8" y="382.4" width="1.7" height="1.7" fill="#8a8a8a"/>
<rect x="660.8" y="394.4" width="1.7" height="1.7" fill="#8a8a8a"/>
<rect x="660.8" y="406.4" width="1.7" height="1.7" fill="#8a8a8a"/>
<rect x="660.8" y="418.4" width="1.7" height="1.7" fill="#8a8a8a"/>
<rect x="660.8" y="430.4" width="1.7" height="1.7" fill="#8a8a8a"/>
<rect x="660.8" y="442.4" width="1.7" height="1.7" fill="#8a8a8a"/>
<rect x="660.8" y="454.4" width="1.7" height="1.7" fill="#8a8a8a"/>
<rect x="660.8" y="466.4" width="1.7" height="1.7" fill="#8a8a8a"/>
<rect x="660.8" y="478.4" width="1.7" height="1.7" fill="#8a8a8a"/>
<rect x="660.8" y="490.4" width="1.7" height="1.7" fill="#8a8a8a"/>
<rect x="660.8" y="502.4" width="1.7" height="1.7" fill="#8a8a8a"/>
<rect x="660.8" y="514.4" width="1.7" height="1.7" fill="#8a8a8a"/>
<rect x="660.8" y="526.4" width="1.7" height="1.7" fill="#8a8a8a"/>
<rect x="660.8" y="538.4" width="1.7" height="1.7" fill="#8a8a8a"/>
<rect x="660.8" y="550.4" width="1.7" height="1.7" fill="#8a8a8a"/>
<rect x="660.8" y="562.4" width="1.7" height="1.7" fill="#8a8a8a"/>
<rect x="660.8" y="574.4" width="1.7" height="1.7" fill="#8a8a8a"/>
<rect x="660.8" y="586.4" width="1.7" height="1.7" fill="#8a8a8a"/>
<rect x="660.8" y="598.4" width="1.7" height="1.7" fill="#8a8a8a"/>
<rect x="660.8" y="610.4" width="1.7" height="1.7" fill="#8a8a8a"/>
<rect x="720.8" y="34.4" width="1.7" height="1.7" fill="#8a8a8a"/>
<rect x="720.8" y="46.4" width="1.7" height="1.7" fill="#8a8a8a"/>
<rect x="720.8" y="58.4" width="1.7" height="1.7" fill="#8a8a8a"/>
<rect x="720.8" y="70.4" width="1.7" height="1.7" fill="#8a8a8a"/>
<rect x="720.8" y="82.4" width="1.7" height="1.7" fill="#8a8a8a"/>
<rect x="720.8" y="94.4" width="1.7" height="1.7" fill="#8a8a8a"/>
<rect x="720.8" y="106.4" width="1.7" height="1.7" fill="#8a8a8a"/>
<rect x="720.8" y="118.4" width="1.7" height="1.7" fill="#8a8a8a"/>
<rect x="720.8" y="130.4" width="1.7" height="1.7" fill="#8a8a8a"/>
<rect x="720.8" y="142.4" width="1.7" height="1.7" fill="#8a8a8a"/>
<rect x="720.8" y="154.4" width="1.7" height="1.7" fill="#8a8a8a"/>
<rect x="720.8" y="166.4" width="1.7" height="1.7" fill="#8a8a8a"/>
<rect x="720.8" y="178.4" width="1.7" height="1.7" fill="#8a8a8a"/>
<rect x="720.8" y="190.4" width="1.7" height="1.7" fill="#8a8a8a"/>
<rect x="720.8" y="202.4" width="1.7" height="1.7" fill="#8a8a8a"/>
<rect x="720.8" y="214.4" width="1.7" height="1.7" fill="#8a8a8a"/>
<rect x="720.8" y="226.4" width="1.7" height="1.7" fill="#8a8a8a"/>
<rect x="720.8" y="238.4" width="1.7" height="1.7" fill="#8a8a8a"/>
<rect x="720.8" y="250.4" width="1.7" height="1.7" fill="#8a8a8a"/>
<rect x="720.8" y="262.4" width="1.7" height="1.7" fill="#8a8a8a"/>
<rect x="720.8" y="274.4" width="1.7" height="1.7" fill="#8a8a8a"/>
<rect x="720.8" y="286.4" width="1.7" height="1.7" fill="#8a8a8a"/>
<rect x="720.8" y="298.4" width="1.7" height="1.7" fill="#8a8a8a"/>
<rect x="720.8" y="310.4" width="1.7" height="1.7" fill="#8a8a8a"/>
<rect x="720.8" y="322.4" width="1.7" height="1.7" fill="#8a8a8a"/>
<rect x="720.8" y="334.4" width="1.7" height="1.7" fill="#8a8a8a"/>
<rect x="720.8" y="346.4" width="1.7" height="1.7" fill="#8a8a8a"/>
<rect x="720.8" y="358.4" width="1.7" height="1.7" fill="#8a8a8a"/>
<rect x="720.8" y="370.4" width="1.7" height="1.7" fill="#8a8a8a"/>
<rect x="720.8" y="382.4" width="1.7" height="1.7" fill="#8a8a8a"/>
<rect x="720.8" y="394.4" width="1.7" height="1.7" fill="#8a8a8a"/>
<rect x="720.8" y="406.4" width="1.7" height="1.7" fill="#8a8a8a"/>
<rect x="720.8" y="418.4" width="1.7" height="1.7" fill="#8a8a8a"/>
<rect x="720.8" y="430.4" width="1.7" height="1.7" fill="#8a8a8a"/>
<rect x="720.8" y="442.4" width="1.7" height="1.7" fill="#8a8a8a"/>
<rect x="720.8" y="454.4" width="1.7" height="1.7" fill="#8a8a8a"/>
<rect x="720.8" y="466.4" width="1.7" height="1.7" fill="#8a8a8a"/>
<rect x="720.8" y="478.4" width="1.7" height="1.7" fill="#8a8a8a"/>
<rect x="720.8" y="490.4" width="1.7" height="1.7" fill="#8a8a8a"/>
<rect x="720.8" y="502.4" width="1.7" height="1.7" fill="#8a8a8a"/>
<rect x="720.8" y="514.4" width="1.7" height="1.7" fill="#8a8a8a"/>
<rect x="720.8" y="526.4" width="1.7" height="1.7" fill="#8a8a8a"/>
<rect x="720.8" y="538.4" width="1.7" height="1.7" fill="#8a8a8a"/>
<rect x="720.8" y="550.4" width="1.7" height="1.7" fill="#8a8a8a"/>
<rect x="720.8" y="562.4" width="1.7" height="1.7" fill="#8a8a8a"/>
<rect x="720.8" y="574.4" width="1.7" height="1.7" fill="#8a8a8a"/>
<rect x="720.8" y="586.4" width="1.7" height="1.7" fill="#8a8a8a"/>
<rect x="720.8" y="598.4" width="1.7" height="1.7" fill="#8a8a8a"/>
<rect x="720.8" y="610.4" width="1.7" height="1.7" fill="#8a8a8a"/>
<rect x="780.8" y="34.4" width="1.7" height="1.7" fill="#8a8a8a"/>
<rect x="780.8" y="46.4" width="1.7" height="1.7" fill="#8a8a8a"/>
<rect x="780.8" y="58.4" width="1.7" height="1.7" fill="#8a8a8a"/>
<rect x="780.8" y="70.4" width="1.7" height="1.7" fill="#8a8a8a"/>
<rect x="780.8" y="82.4" width="1.7" height="1.7" fill="#8a8a8a"/>
<rect x="780.8" y="94.4" width="1.7" height="1.7" fill="#8a8a8a"/>
<rect x="780.8" y="106.4" width="1.7" height="1.7" fill="#8a8a8a"/>
<rect x="780.8" y="118.4" width="1.7" height="1.7" fill="#8a8a8a"/>
<rect x="780.8" y="130.4" width="1.7" height="1.7" fill="#8a8a8a"/>
<rect x="780.8" y="142.4" width="1.7" height="1.7" fill="#8a8a8a"/>
<rect x="780.8" y="154.4" width="1.7" height="1.7" fill="#8a8a8a"/>
<rect x="780.8" y="166.4" width="1.7" height="1.7" fill="#8a8a8a"/>
<rect x="780.8" y="178.4" width="1.7" height="1.7" fill="#8a8a8a"/>
<rect x="780.8" y="190.4" width="1.7" height="1.7" fill="#8a8a8a"/>
<rect x="780.8" y="202.4" width="1.7" height="1.7" fill="#8a8a8a"/>
<rect x="780.8" y="214.4" width="1.7" height="1.7" fill="#8a8a8a"/>
<rect x="780.8" y="226.4" width="1.7" height="1.7" fill="#8a8a8a"/>
<rect x="780.8" y="238.4" width="1.7" height="1.7" fill="#8a8a8a"/>
<rect x="780.8" y="250.4" width="1.7" height="1.7" fill="#8a8a8a"/>
<rect x="780.8" y="262.4" width="1.7" height="1.7" fill="#8a8a8a"/>
<rect x="780.8" y="274.4" width="1.7" height="1.7" fill="#8a8a8a"/>
<rect x="780.8" y="286.4" width="1.7" height="1.7" fill="#8a8a8a"/>
<rect x="780.8" y="298.4" width="1.7" height="1.7" fill="#8a8a8a"/>
<rect x="780.8" y="310.4" width="1.7" height="1.7" fill="#8a8a8a"/>
<rect x="780.8" y="322.4" width="1.7" height="1.7" fill="#8a8a8a"/>
<rect x="780.8" y="334.4" width="1.7" height="1.7" fill="#8a8a8a"/>
<rect x="780.8" y="346.4" width="1.7" height="1.7" fill="#8a8a8a"/>
<rect x="780.8" y="358.4" width="1.7" height="1.7" fill="#8a8a8a"/>
<rect x="780.8" y="370.4" width="1.7" height="1.7" fill="#8a8a8a"/>
<rect x="780.8" y="382.4" width="1.7" height="1.7" fill="#8a8a8a"/>
<rect x="780.8" y="394.4" width="1.7" height="1.7" fill="#8a8a8a"/>
<rect x="780.8" y="406.4" width="1.7" height="1.7" fill="#8a8a8a"/>
<rect x="780.8" y="418.4" width="1.7" height="1.7" fill="#8a8a8a"/>
<rect x="780.8" y="430.4" width="1.7" height="1.7" fill="#8a8a8a"/>
<rect x="780.8" y="442.4" width="1.7" height="1.7" fill="#8a8a8a"/>
<rect x="780.8" y="454.4" width="1.7" height="1.7" fill="#8a8a8a"/>
<rect x="780.8" y="466.4" width="1.7" height="1.7" fill="#8a8a8a"/>
<rect x="780.8" y="478.4" width="1.7" height="1.7" fill="#8a8a8a"/>
<rect x="780.8" y="490.4" width="1.7" height="1.7" fill="#8a8a8a"/>
<rect x="780.8" y="502.4" width="1.7" height="1.7" fill="#8a8a8a"/>
<rect x="780.8" y="514.4" width="1.7" height="1.7" fill="#8a8a8a"/>
<rect x="780.8" y="526.4" width="1.7" height="1.7" fill="#8a8a8a"/>
<rect x="780.8" y="538.4" width="1.7" height="1.7" fill="#8a8a8a"/>
<rect x="780.8" y="550.4" width="1.7" height="1.7" fill="#8a8a8a"/>
<rect x="780.8" y="562.4" width="1.7" height="1.7" fill="#8a8a8a"/>
<rect x="780.8" y="574.4" width="1.7" height="1.7" fill="#8a8a8a"/>
<rect x="780.8" y="586.4" width="1.7" height="1.7" fill="#8a8a8a"/>
<rect x="780.8" y="598.4" width="1.7" height="1.7" fill="#8a8a8a"/>
<rect x="780.8" y="610.4" width="1.7" height="1.7" fill="#8a8a8a"/>
<rect x="840.8" y="34.4" width="1.7" height="1.7" fill="#8a8a8a"/>
<rect x="840.8" y="46.4" width="1.7" height="1.7" fill="#8a8a8a"/>
<rect x="840.8" y="58.4" width="1.7" height="1.7" fill="#8a8a8a"/>
<rect x="840.8" y="70.4" width="1.7" height="1.7" fill="#8a8a8a"/>
<rect x="840.8" y="82.4" width="1.7" height="1.7" fill="#8a8a8a"/>
<rect x="840.8" y="94.4" width="1.7" height="1.7" fill="#8a8a8a"/>
<rect x="840.8" y="106.4" width="1.7" height="1.7" fill="#8a8a8a"/>
<rect x="840.8" y="118.4" width="1.7" height="1.7" fill="#8a8a8a"/>
<rect x="840.8" y="130.4" width="1.7" height="1.7" fill="#8a8a8a"/>
<rect x="840.8" y="142.4" width="1.7" height="1.7" fill="#8a8a8a"/>
<rect x="840.8" y="154.4" width="1.7" height="1.7" fill="#8a8a8a"/>
<rect x="840.8" y="166.4" width="1.7" height="1.7" fill="#8a8a8a"/>
<rect x="840.8" y="178.4" width="1.7" height="1.7" fill="#8a8a8a"/>
<rect x="840.8" y="190.4" width="1.7" height="1.7" fill="#8a8a8a"/>
<rect x="840.8" y="202.4" width="1.7" height="1.7" fill="#8a8a8a"/>
<rect x="840.8" y="214.4" width="1.7" height="1.7" fill="#8a8a8a"/>
<rect x="840.8" y="226.4" width="1.7" height="1.7" fill="#8a8a8a"/>
<rect x="840.8" y="238.4" width="1.7" height="1.7" fill="#8a8a8a"/>
<rect x="840.8" y="250.4" width="1.7" height="1.7" fill="#8a8a8a"/>
<rect x="840.8" y="262.4" width="1.7" height="1.7" fill="#8a8a8a"/>
<rect x="840.8" y="274.4" width="1.7" height="1.7" fill="#8a8a8a"/>
<rect x="840.8" y="286.4" width="1.7" height="1.7" fill="#8a8a8a"/>
<rect x="840.8" y="298.4" width="1.7" height="1.7" fill="#8a8a8a"/>
<rect x="840.8" y="310.4" width="1.7" height="1.7" fill="#8a8a8a"/>
<rect x="840.8" y="322.4" width="1.7" height="1.7" fill="#8a8a8a"/>
<rect x="840.8" y="334.4" width="1.7" height="1.7" fill="#8a8a8a"/>
<rect x="840.8" y="346.4" width="1.7" height="1.7" fill="#8a8a8a"/>
<rect x="840.8" y="358.4" width="1.7" height="1.7" fill="#8a8a8a"/>
<rect x="840.8" y="370.4" width="1.7" height="1.7" fill="#8a8a8a"/>
<rect x="840.8" y="382.4" width="1.7" height="1.7" fill="#8a8a8a"/>
<rect x="840.8" y="394.4" width="1.7" height="1.7" fill="#8a8a8a"/>
<rect x="840.8" y="406.4" width="1.7" height="1.7" fill="#8a8a8a"/>
<rect x="840.8" y="418.4" width="1.7" height="1.7" fill="#8a8a8a"/>
<rect x="840.8" y="430.4" width="1.7" height="1.7" fill="#8a8a8a"/>
<rect x="840.8" y="442.4" width="1.7" height="1.7" fill="#8a8a8a"/>
<rect x="840.8" y="454.4" width="1.7" height="1.7" fill="#8a8a8a"/>
<rect x="840.8" y="466.4" width="1.7" height="1.7" fill="#8a8a8a"/>
<rect x="840.8" y="478.4" width="1.7" height="1.7" fill="#8a8a8a"/>
<rect x="840.8" y="490.4" width="1.7" height="1.7" fill="#8a8a8a"/>
<rect x="840.8" y="502.4" width="1.7" height="1.7" fill="#8a8a8a"/>
<rect x="840.8" y="514.4" width="1.7" height="1.7" fill="#8a8a8a"/>
<rect x="840.8" y="526.4" width="1.7" height="1.7" fill="#8a8a8a"/>
<rect x="840.8" y="538.4" width="1.7" height="1.7" fill="#8a8a8a"/>
<rect x="840.8" y="550.4" width="1.7" height="1.7" fill="#8a8a8a"/>
<rect x="840.8" y="562.4" width="1.7" height="1.7" fill="#8a8a8a"/>
<rect x="840.8" y="574.4" width="1.7" height="1.7" fill="#8a8a8a"/>
<rect x="840.8" y="586.4" width="1.7" height="1.7" fill="#8a8a8a"/>
<rect x="840.8" y="598.4" width="1.7" height="1.7" fill="#8a8a8a"/>
<rect x="840.8" y="610.4" width="1.7" height="1.7" fill="#8a8a8a"/>
<rect x="900.8" y="34.4" width="1.7" height="1.7" fill="#8a8a8a"/>
<rect x="900.8" y="46.4" width="1.7" height="1.7" fill="#8a8a8a"/>
<rect x="900.8" y="58.4" width="1.7" height="1.7" fill="#8a8a8a"/>
<rect x="900.8" y="70.4" width="1.7" height="1.7" fill="#8a8a8a"/>
<rect x="900.8" y="82.4" width="1.7" height="1.7" fill="#8a8a8a"/>
<rect x="900.8" y="94.4" width="1.7" height="1.7" fill="#8a8a8a"/>
<rect x="900.8" y="106.4" width="1.7" height="1.7" fill="#8a8a8a"/>
<rect x="900.8" y="118.4" width="1.7" height="1.7" fill="#8a8a8a"/>
<rect x="900.8" y="130.4" width="1.7" height="1.7" fill="#8a8a8a"/>
<rect x="900.8" y="142.4" width="1.7" height="1.7" fill="#8a8a8a"/>
<rect x="900.8" y="154.4" width="1.7" height="1.7" fill="#8a8a8a"/>
<rect x="900.8" y="166.4" width="1.7" height="1.7" fill="#8a8a8a"/>
<rect x="900.8" y="178.4" width="1.7" height="1.7" fill="#8a8a8a"/>
<rect x="900.8" y="190.4" width="1.7" height="1.7" fill="#8a8a8a"/>
<rect x="900.8" y="202.4" width="1.7" height="1.7" fill="#8a8a8a"/>
<rect x="900.8" y="214.4" width="1.7" height="1.7" fill="#8a8a8a"/>
<rect x="900.8" y="226.4" width="1.7" height="1.7" fill="#8a8a8a"/>
<rect x="900.8" y="238.4" width="1.7" height="1.7" fill="#8a8a8a"/>
<rect x="900.8" y="250.4" width="1.7" height="1.7" fill="#8a8a8a"/>
<rect x="900.8" y="262.4" width="1.7" height="1.7" fill="#8a8a8a"/>
<rect x="900.8" y="274.4" width="1.7" height="1.7" fill="#8a8a8a"/>
<rect x="900.8" y="286.4" width="1.7" height="1.7" fill="#8a8a8a"/>
<rect x="900.8" y="298.4" width="1.7" height="1.7" fill="#8a8a8a"/>
<rect x="900.8" y="310.4" width="1.7" height="1.7" fill="#8a8a8a"/>
<rect x="900.8" y="322.4" width="1.7" height="1.7" fill="#8a8a8a"/>
<rect x="900.8" y="334.4" width="1.7" height="1.7" fill="#8a8a8a"/>
<rect x="900.8" y="346.4" width="1.7" height="1.7" fill="#8a8a8a"/>
<rect x="900.8" y="358.4" width="1.7" height="1.7" fill="#8a8a8a"/>
<rect x="900.8" y="370.4" width="1.7" height="1.7" fill="#8a8a8a"/>
<rect x="900.8" y="382.4" width="1.7" height="1.7" fill="#8a8a8a"/>
<rect x="900.8" y="394.4" width="1.7" height="1.7" fill="#8a8a8a"/>
<rect x="900.8" y="406.4" width="1.7" height="1.7" fill="#8a8a8a"/>
<rect x="900.8" y="418.4" width="1.7" height="1.7" fill="#8a8a8a"/>
<rect x="900.8" y="430.4" width="1.7" height="1.7" fill="#8a8a8a"/>
<rect x="900.8" y="442.4" width="1.7" height="1.7" fill="#8a8a8a"/>
<rect x="900.8" y="454.4" width="1.7" height="1.7" fill="#8a8a8a"/>
<rect x="900.8" y="466.4" width="1.7" height="1.7" fill="#8a8a8a"/>
<rect x="900.8" y="478.4" width="1.7" height="1.7" fill="#8a8a8a"/>
<rect x="900.8" y="490.4" width="1.7" height="1.7" fill="#8a8a8a"/>
<rect x="900.8" y="502.4" width="1.7" height="1.7" fill="#8a8a8a"/>
<rect x="900.8" y="514.4" width="1.7" height="1.7" fill="#8a8a8a"/>
<rect x="900.8" y="526.4" width="1.7" height="1.7" fill="#8a8a8a"/>
<rect x="900.8" y="538.4" width="1.7" height="1.7" fill="#8a8a8a"/>
<rect x="900.8" y="550.4" width="1.7" height="1.7" fill="#8a8a8a"/>
<rect x="900.8" y="562.4" width="1.7" height="1.7" fill="#8a8a8a"/>
<rect x="900.8" y="574.4" width="1.7" height="1.7" fill="#8a8a8a"/>
<rect x="900.8" y="586.4" width="1.7" height="1.7" fill="#8a8a8a"/>
<rect x="900.8" y="598.4" width="1.7" height="1.7" fill="#8a8a8a"/>
<rect x="900.8" y="610.4" width="1.7" height="1.7" fill="#8a8a8a"/>
<rect x="36.8" y="82.4" width="1.7" height="1.7" fill="#8a8a8a"/>
<rect x="48.8" y="82.4" width="1.7" height="1.7" fill="#8a8a8a"/>
<rect x="72.8" y="82.4" width="1.7" height="1.7" fill="#8a8a8a"/>
<rect x="84.8" y="82.4" width="1.7" height="1.7" fill="#8a8a8a"/>
<rect x="96.8" y="82.4" width="1.7" height="1.7" fill="#8a8a8a"/>
<rect x="108.8" y="82.4" width="1.7" height="1.7" fill="#8a8a8a"/>
<rect x="132.8" y="82.4" width="1.7" height="1.7" fill="#8a8a8a"/>
<rect x="144.8" y="82.4" width="1.7" height="1.7" fill="#8a8a8a"/>
<rect x="156.8" y="82.4" width="1.7" height="1.7" fill="#8a8a8a"/>
<rect x="168.8" y="82.4" width="1.7" height="1.7" fill="#8a8a8a"/>
<rect x="192.8" y="82.4" width="1.7" height="1.7" fill="#8a8a8a"/>
<rect x="204.8" y="82.4" width="1.7" height="1.7" fill="#8a8a8a"/>
<rect x="216.8" y="82.4" width="1.7" height="1.7" fill="#8a8a8a"/>
<rect x="228.8" y="82.4" width="1.7" height="1.7" fill="#8a8a8a"/>
<rect x="252.8" y="82.4" width="1.7" height="1.7" fill="#8a8a8a"/>
<rect x="264.8" y="82.4" width="1.7" height="1.7" fill="#8a8a8a"/>
<rect x="276.8" y="82.4" width="1.7" height="1.7" fill="#8a8a8a"/>
<rect x="288.8" y="82.4" width="1.7" height="1.7" fill="#8a8a8a"/>
<rect x="312.8" y="82.4" width="1.7" height="1.7" fill="#8a8a8a"/>
<rect x="324.8" y="82.4" width="1.7" height="1.7" fill="#8a8a8a"/>
<rect x="336.8" y="82.4" width="1.7" height="1.7" fill="#8a8a8a"/>
<rect x="348.8" y="82.4" width="1.7" height="1.7" fill="#8a8a8a"/>
<rect x="372.8" y="82.4" width="1.7" height="1.7" fill="#8a8a8a"/>
<rect x="384.8" y="82.4" width="1.7" height="1.7" fill="#8a8a8a"/>
<rect x="396.8" y="82.4" width="1.7" height="1.7" fill="#8a8a8a"/>
<rect x="408.8" y="82.4" width="1.7" height="1.7" fill="#8a8a8a"/>
<rect x="432.8" y="82.4" width="1.7" height="1.7" fill="#8a8a8a"/>
<rect x="444.8" y="82.4" width="1.7" height="1.7" fill="#8a8a8a"/>
<rect x="456.8" y="82.4" width="1.7" height="1.7" fill="#8a8a8a"/>
<rect x="468.8" y="82.4" width="1.7" height="1.7" fill="#8a8a8a"/>
<rect x="492.8" y="82.4" width="1.7" height="1.7" fill="#8a8a8a"/>
<rect x="504.8" y="82.4" width="1.7" height="1.7" fill="#8a8a8a"/>
<rect x="516.8" y="82.4" width="1.7" height="1.7" fill="#8a8a8a"/>
<rect x="528.8" y="82.4" width="1.7" height="1.7" fill="#8a8a8a"/>
<rect x="552.8" y="82.4" width="1.7" height="1.7" fill="#8a8a8a"/>
<rect x="564.8" y="82.4" width="1.7" height="1.7" fill="#8a8a8a"/>
<rect x="576.8" y="82.4" width="1.7" height="1.7" fill="#8a8a8a"/>
<rect x="588.8" y="82.4" width="1.7" height="1.7" fill="#8a8a8a"/>
<rect x="612.8" y="82.4" width="1.7" height="1.7" fill="#8a8a8a"/>
<rect x="624.8" y="82.4" width="1.7" height="1.7" fill="#8a8a8a"/>
<rect x="636.8" y="82.4" width="1.7" height="1.7" fill="#8a8a8a"/>
<rect x="648.8" y="82.4" width="1.7" height="1.7" fill="#8a8a8a"/>
<rect x="672.8" y="82.4" width="1.7" height="1.7" fill="#8a8a8a"/>
<rect x="684.8" y="82.4" width="1.7" height="1.7" fill="#8a8a8a"/>
<rect x="696.8" y="82.4" width="1.7" height="1.7" fill="#8a8a8a"/>
<rect x="708.8" y="82.4" width="1.7" height="1.7" fill="#8a8a8a"/>
<rect x="732.8" y="82.4" width="1.7" height="1.7" fill="#8a8a8a"/>
<rect x="744.8" y="82.4" width="1.7" height="1.7" fill="#8a8a8a"/>
<rect x="756.8" y="82.4" width="1.7" height="1.7" fill="#8a8a8a"/>
<rect x="768.8" y="82.4" width="1.7" height="1.7" fill="#8a8a8a"/>
<rect x="792.8" y="82.4" width="1.7" height="1.7" fill="#8a8a8a"/>
<rect x="804.8" y="82.4" width="1.7" height="1.7" fill="#8a8a8a"/>
<rect x="816.8" y="82.4" width="1.7" height="1.7" fill="#8a8a8a"/>
<rect x="828.8" y="82.4" width="1.7" height="1.7" fill="#8a8a8a"/>
<rect x="852.8" y="82.4" width="1.7" height="1.7" fill="#8a8a8a"/>
<rect x="864.8" y="82.4" width="1.7" height="1.7" fill="#8a8a8a"/>
<rect x="876.8" y="82.4" width="1.7" height="1.7" fill="#8a8a8a"/>
<rect x="888.8" y="82.4" width="1.7" height="1.7" fill="#8a8a8a"/>
<rect x="912.8" y="82.4" width="1.7" height="1.7" fill="#8a8a8a"/>
<rect x="924.8" y="82.4" width="1.7" height="1.7" fill="#8a8a8a"/>
<rect x="36.8" y="142.4" width="1.7" height="1.7" fill="#8a8a8a"/>
<rect x="48.8" y="142.4" width="1.7" height="1.7" fill="#8a8a8a"/>
<rect x="72.8" y="142.4" width="1.7" height="1.7" fill="#8a8a8a"/>
<rect x="84.8" y="142.4" width="1.7" height="1.7" fill="#8a8a8a"/>
<rect x="96.8" y="142.4" width="1.7" height="1.7" fill="#8a8a8a"/>
<rect x="108.8" y="142.4" width="1.7" height="1.7" fill="#8a8a8a"/>
<rect x="132.8" y="142.4" width="1.7" height="1.7" fill="#8a8a8a"/>
<rect x="144.8" y="142.4" width="1.7" height="1.7" fill="#8a8a8a"/>
<rect x="156.8" y="142.4" width="1.7" height="1.7" fill="#8a8a8a"/>
<rect x="168.8" y="142.4" width="1.7" height="1.7" fill="#8a8a8a"/>
<rect x="192.8" y="142.4" width="1.7" height="1.7" fill="#8a8a8a"/>
<rect x="204.8" y="142.4" width="1.7" height="1.7" fill="#8a8a8a"/>
<rect x="216.8" y="142.4" width="1.7" height="1.7" fill="#8a8a8a"/>
<rect x="228.8" y="142.4" width="1.7" height="1.7" fill="#8a8a8a"/>
<rect x="252.8" y="142.4" width="1.7" height="1.7" fill="#8a8a8a"/>
<rect x="264.8" y="142.4" width="1.7" height="1.7" fill="#8a8a8a"/>
<rect x="276.8" y="142.4" width="1.7" height="1.7" fill="#8a8a8a"/>
<rect x="288.8" y="142.4" width="1.7" height="1.7" fill="#8a8a8a"/>
<rect x="312.8" y="142.4" width="1.7" height="1.7" fill="#8a8a8a"/>
<rect x="324.8" y="142.4" width="1.7" height="1.7" fill="#8a8a8a"/>
<rect x="336.8" y="142.4" width="1.7" height="1.7" fill="#8a8a8a"/>
<rect x="348.8" y="142.4" width="1.7" height="1.7" fill="#8a8a8a"/>
<rect x="372.8" y="142.4" width="1.7" height="1.7" fill="#8a8a8a"/>
<rect x="384.8" y="142.4" width="1.7" height="1.7" fill="#8a8a8a"/>
<rect x="396.8" y="142.4" width="1.7" height="1.7" fill="#8a8a8a"/>
<rect x="408.8" y="142.4" width="1.7" height="1.7" fill="#8a8a8a"/>
<rect x="432.8" y="142.4" width="1.7" height="1.7" fill="#8a8a8a"/>
<rect x="444.8" y="142.4" width="1.7" height="1.7" fill="#8a8a8a"/>
<rect x="456.8" y="142.4" width="1.7" height="1.7" fill="#8a8a8a"/>
<rect x="468.8" y="142.4" width="1.7" height="1.7" fill="#8a8a8a"/>
<rect x="492.8" y="142.4" width="1.7" height="1.7" fill="#8a8a8a"/>
<rect x="504.8" y="142.4" width="1.7" height="1.7" fill="#8a8a8a"/>
<rect x="516.8" y="142.4" width="1.7" height="1.7" fill="#8a8a8a"/>
<rect x="528.8" y="142.4" width="1.7" height="1.7" fill="#8a8a8a"/>
<rect x="552.8" y="142.4" width="1.7" height="1.7" fill="#8a8a8a"/>
<rect x="564.8" y="142.4" width="1.7" height="1.7" fill="#8a8a8a"/>
<rect x="576.8" y="142.4" width="1.7" height="1.7" fill="#8a8a8a"/>
<rect x="588.8" y="142.4" width="1.7" height="1.7" fill="#8a8a8a"/>
<rect x="612.8" y="142.4" width="1.7" height="1.7" fill="#8a8a8a"/>
<rect x="624.8" y="142.4" width="1.7" height="1.7" fill="#8a8a8a"/>
<rect x="636.8" y="142.4" width="1.7" height="1.7" fill="#8a8a8a"/>
<rect x="648.8" y="142.4" width="1.7" height="1.7" fill="#8a8a8a"/>
<rect x="672.8" y="142.4" width="1.7" height="1.7" fill="#8a8a8a"/>
<rect x="684.8" y="142.4" width="1.7" height="1.7" fill="#8a8a8a"/>
<rect x="696.8" y="142.4" width="1.7" height="1.7" fill="#8a8a8a"/>
<rect x="708.8" y="142.4" width="1.7" height="1.7" fill="#8a8a8a"/>
<rect x="732.8" y="142.4" width="1.7" height="1.7" fill="#8a8a8a"/>
<rect x="744.8" y="142.4" width="1.7" height="1.7" fill="#8a8a8a"/>
<rect x="756.8" y="142.4" width="1.7" height="1.7" fill="#8a8a8a"/>
<rect x="768.8" y="142.4" width="1.7" height="1.7" fill="#8a8a8a"/>
<rect x="792.8" y="142.4" width="1.7" height="1.7" fill="#8a8a8a"/>
<rect x="804.8" y="142.4" width="1.7" height="1.7" fill="#8a8a8a"/>
<rect x="816.8" y="142.4" width="1.7" height="1.7" fill="#8a8a8a"/>
<rect x="828.8" y="142.4" width="1.7" height="1.7" fill="#8a8a8a"/>
<rect x="852.8" y="142.4" width="1.7" height="1.7" fill="#8a8a8a"/>
<rect x="864.8" y="142.4" width="1.7" height="1.7" fill="#8a8a8a"/>
<rect x="876.8" y="142.4" width="1.7" height="1.7" fill="#8a8a8a"/>
<rect x="888.8" y="142.4" width="1.7" height="1.7" fill="#8a8a8a"/>
<rect x="912.8" y="142.4" width="1.7" height="1.7" fill="#8a8a8a"/>
<rect x="924.8" y="142.4" width="1.7" height="1.7" fill="#8a8a8a"/>
<rect x="36.8" y="202.4" width="1.7" height="1.7" fill="#8a8a8a"/>
<rect x="48.8" y="202.4" width="1.7" height="1.7" fill="#8a8a8a"/>
<rect x="72.8" y="202.4" width="1.7" height="1.7" fill="#8a8a8a"/>
<rect x="84.8" y="202.4" width="1.7" height="1.7" fill="#8a8a8a"/>
<rect x="96.8" y="202.4" width="1.7" height="1.7" fill="#8a8a8a"/>
<rect x="108.8" y="202.4" width="1.7" height="1.7" fill="#8a8a8a"/>
<rect x="132.8" y="202.4" width="1.7" height="1.7" fill="#8a8a8a"/>
<rect x="144.8" y="202.4" width="1.7" height="1.7" fill="#8a8a8a"/>
<rect x="156.8" y="202.4" width="1.7" height="1.7" fill="#8a8a8a"/>
<rect x="168.8" y="202.4" width="1.7" height="1.7" fill="#8a8a8a"/>
<rect x="192.8" y="202.4" width="1.7" height="1.7" fill="#8a8a8a"/>
<rect x="204.8" y="202.4" width="1.7" height="1.7" fill="#8a8a8a"/>
<rect x="216.8" y="202.4" width="1.7" height="1.7" fill="#8a8a8a"/>
<rect x="228.8" y="202.4" width="1.7" height="1.7" fill="#8a8a8a"/>
<rect x="252.8" y="202.4" width="1.7" height="1.7" fill="#8a8a8a"/>
<rect x="264.8" y="202.4" width="1.7" height="1.7" fill="#8a8a8a"/>
<rect x="276.8" y="202.4" width="1.7" height="1.7" fill="#8a8a8a"/>
<rect x="288.8" y="202.4" width="1.7" height="1.7" fill="#8a8a8a"/>
<rect x="312.8" y="202.4" width="1.7" height="1.7" fill="#8a8a8a"/>
<rect x="324.8" y="202.4" width="1.7" height="1.7" fill="#8a8a8a"/>
<rect x="336.8" y="202.4" width="1.7" height="1.7" fill="#8a8a8a"/>
<rect x="348.8" y="202.4" width="1.7" height="1.7" fill="#8a8a8a"/>
<rect x="372.8" y="202.4" width="1.7" height="1.7" fill="#8a8a8a"/>
<rect x="384.8" y="202.4" width="1.7" height="1.7" fill="#8a8a8a"/>
<rect x="396.8" y="202.4" width="1.7" height="1.7" fill="#8a8a8a"/>
<rect x="408.8" y="202.4" width="1.7" height="1.7" fill="#8a8a8a"/>
<rect x="432.8" y="202.4" width="1.7" height="1.7" fill="#8a8a8a"/>
<rect x="444.8" y="202.4" width="1.7" height="1.7" fill="#8a8a8a"/>
<rect x="456.8" y="202.4" width="1.7" height="1.7" fill="#8a8a8a"/>
<rect x="468.8" y="202.4" width="1.7" height="1.7" fill="#8a8a8a"/>
<rect x="492.8" y="202.4" width="1.7" height="1.7" fill="#8a8a8a"/>
<rect x="504.8" y="202.4" width="1.7" height="1.7" fill="#8a8a8a"/>
<rect x="516.8" y="202.4" width="1.7" height="1.7" fill="#8a8a8a"/>
<rect x="528.8" y="202.4" width="1.7" height="1.7" fill="#8a8a8a"/>
<rect x="552.8" y="202.4" width="1.7" height="1.7" fill="#8a8a8a"/>
<rect x="564.8" y="202.4" width="1.7" height="1.7" fill="#8a8a8a"/>
<rect x="576.8" y="202.4" width="1.7" height="1.7" fill="#8a8a8a"/>
<rect x="588.8" y="202.4" width="1.7" height="1.7" fill="#8a8a8a"/>
<rect x="612.8" y="202.4" width="1.7" height="1.7" fill="#8a8a8a"/>
<rect x="624.8" y="202.4" width="1.7" height="1.7" fill="#8a8a8a"/>
<rect x="636.8" y="202.4" width="1.7" height="1.7" fill="#8a8a8a"/>
<rect x="648.8" y="202.4" width="1.7" height="1.7" fill="#8a8a8a"/>
<rect x="672.8" y="202.4" width="1.7" height="1.7" fill="#8a8a8a"/>
<rect x="684.8" y="202.4" width="1.7" height="1.7" fill="#8a8a8a"/>
<rect x="696.8" y="202.4" width="1.7" height="1.7" fill="#8a8a8a"/>
<rect x="708.8" y="202.4" width="1.7" height="1.7" fill="#8a8a8a"/>
<rect x="732.8" y="202.4" width="1.7" height="1.7" fill="#8a8a8a"/>
<rect x="744.8" y="202.4" width="1.7" height="1.7" fill="#8a8a8a"/>
<rect x="756.8" y="202.4" width="1.7" height="1.7" fill="#8a8a8a"/>
<rect x="768.8" y="202.4" width="1.7" height="1.7" fill="#8a8a8a"/>
<rect x="792.8" y="202.4" width="1.7" height="1.7" fill="#8a8a8a"/>
<rect x="804.8" y="202.4" width="1.7" height="1.7" fill="#8a8a8a"/>
<rect x="816.8" y="202.4" width="1.7" height="1.7" fill="#8a8a8a"/>
<rect x="828.8" y="202.4" width="1.7" height="1.7" fill="#8a8a8a"/>
<rect x="852.8" y="202.4" width="1.7" height="1.7" fill="#8a8a8a"/>
<rect x="864.8" y="202.4" width="1.7" height="1.7" fill="#8a8a8a"/>
<rect x="876.8" y="202.4" width="1.7" height="1.7" fill="#8a8a8a"/>
<rect x="888.8" y="202.4" width="1.7" height="1.7" fill="#8a8a8a"/>
<rect x="912.8" y="202.4" width="1.7" height="1.7" fill="#8a8a8a"/>
<rect x="924.8" y="202.4" width="1.7" height="1.7" fill="#8a8a8a"/>
<rect x="36.8" y="262.4" width="1.7" height="1.7" fill="#8a8a8a"/>
<rect x="48.8" y="262.4" width="1.7" height="1.7" fill="#8a8a8a"/>
<rect x="72.8" y="262.4" width="1.7" height="1.7" fill="#8a8a8a"/>
<rect x="84.8" y="262.4" width="1.7" height="1.7" fill="#8a8a8a"/>
<rect x="96.8" y="262.4" width="1.7" height="1.7" fill="#8a8a8a"/>
<rect x="108.8" y="262.4" width="1.7" height="1.7" fill="#8a8a8a"/>
<rect x="132.8" y="262.4" width="1.7" height="1.7" fill="#8a8a8a"/>
<rect x="144.8" y="262.4" width="1.7" height="1.7" fill="#8a8a8a"/>
<rect x="156.8" y="262.4" width="1.7" height="1.7" fill="#8a8a8a"/>
<rect x="168.8" y="262.4" width="1.7" height="1.7" fill="#8a8a8a"/>
<rect x="192.8" y="262.4" width="1.7" height="1.7" fill="#8a8a8a"/>
<rect x="204.8" y="262.4" width="1.7" height="1.7" fill="#8a8a8a"/>
<rect x="216.8" y="262.4" width="1.7" height="1.7" fill="#8a8a8a"/>
<rect x="228.8" y="262.4" width="1.7" height="1.7" fill="#8a8a8a"/>
<rect x="252.8" y="262.4" width="1.7" height="1.7" fill="#8a8a8a"/>
<rect x="264.8" y="262.4" width="1.7" height="1.7" fill="#8a8a8a"/>
<rect x="276.8" y="262.4" width="1.7" height="1.7" fill="#8a8a8a"/>
<rect x="288.8" y="262.4" width="1.7" height="1.7" fill="#8a8a8a"/>
<rect x="312.8" y="262.4" width="1.7" height="1.7" fill="#8a8a8a"/>
<rect x="324.8" y="262.4" width="1.7" height="1.7" fill="#8a8a8a"/>
<rect x="336.8" y="262.4" width="1.7" height="1.7" fill="#8a8a8a"/>
<rect x="348.8" y="262.4" width="1.7" height="1.7" fill="#8a8a8a"/>
<rect x="372.8" y="262.4" width="1.7" height="1.7" fill="#8a8a8a"/>
<rect x="384.8" y="262.4" width="1.7" height="1.7" fill="#8a8a8a"/>
<rect x="396.8" y="262.4" width="1.7" height="1.7" fill="#8a8a8a"/>
<rect x="408.8" y="262.4" width="1.7" height="1.7" fill="#8a8a8a"/>
<rect x="432.8" y="262.4" width="1.7" height="1.7" fill="#8a8a8a"/>
<rect x="444.8" y="262.4" width="1.7" height="1.7" fill="#8a8a8a"/>
<rect x="456.8" y="262.4" width="1.7" height="1.7" fill="#8a8a8a"/>
<rect x="468.8" y="262.4" width="1.7" height="1.7" fill="#8a8a8a"/>
<rect x="492.8" y="262.4" width="1.7" height="1.7" fill="#8a8a8a"/>
<rect x="504.8" y="262.4" width="1.7" height="1.7" fill="#8a8a8a"/>
<rect x="516.8" y="262.4" width="1.7" height="1.7" fill="#8a8a8a"/>
<rect x="528.8" y="262.4" width="1.7" height="1.7" fill="#8a8a8a"/>
<rect x="552.8" y="262.4" width="1.7" height="1.7" fill="#8a8a8a"/>
<rect x="564.8" y="262.4" width="1.7" height="1.7" fill="#8a8a8a"/>
<rect x="576.8" y="262.4" width="1.7" height="1.7" fill="#8a8a8a"/>
<rect x="588.8" y="262.4" width="1.7" height="1.7" fill="#8a8a8a"/>
<rect x="612.8" y="262.4" width="1.7" height="1.7" fill="#8a8a8a"/>
<rect x="624.8" y="262.4" width="1.7" height="1.7" fill="#8a8a8a"/>
<rect x="636.8" y="262.4" width="1.7" height="1.7" fill="#8a8a8a"/>
<rect x="648.8" y="262.4" width="1.7" height="1.7" fill="#8a8a8a"/>
<rect x="672.8" y="262.4" width="1.7" height="1.7" fill="#8a8a8a"/>
<rect x="684.8" y="262.4" width="1.7" height="1.7" fill="#8a8a8a"/>
<rect x="696.8" y="262.4" width="1.7" height="1.7" fill="#8a8a8a"/>
<rect x="708.8" y="262.4" width="1.7" height="1.7" fill="#8a8a8a"/>
<rect x="732.8" y="262.4" width="1.7" height="1.7" fill="#8a8a8a"/>
<rect x="744.8" y="262.4" width="1.7" height="1.7" fill="#8a8a8a"/>
<rect x="756.8" y="262.4" width="1.7" height="1.7" fill="#8a8a8a"/>
<rect x="768.8" y="262.4" width="1.7" height="1.7" fill="#8a8a8a"/>
<rect x="792.8" y="262.4" width="1.7" height="1.7" fill="#8a8a8a"/>
<rect x="804.8" y="262.4" width="1.7" height="1.7" fill="#8a8a8a"/>
<rect x="816.8" y="262.4" width="1.7" height="1.7" fill="#8a8a8a"/>
<rect x="828.8" y="262.4" width="1.7" height="1.7" fill="#8a8a8a"/>
<rect x="852.8" y="262.4" width="1.7" height="1.7" fill="#8a8a8a"/>
<rect x="864.8" y="262.4" width="1.7" height="1.7" fill="#8a8a8a"/>
<rect x="876.8" y="262.4" width="1.7" height="1.7" fill="#8a8a8a"/>
<rect x="888.8" y="262.4" width="1.7" height="1.7" fill="#8a8a8a"/>
<rect x="912.8" y="262.4" width="1.7" height="1.7" fill="#8a8a8a"/>
<rect x="924.8" y="262.4" width="1.7" height="1.7" fill="#8a8a8a"/>
<rect x="36.8" y="382.4" width="1.7" height="1.7" fill="#8a8a8a"/>
<rect x="48.8" y="382.4" width="1.7" height="1.7" fill="#8a8a8a"/>
<rect x="72.8" y="382.4" width="1.7" height="1.7" fill="#8a8a8a"/>
<rect x="84.8" y="382.4" width="1.7" height="1.7" fill="#8a8a8a"/>
<rect x="96.8" y="382.4" width="1.7" height="1.7" fill="#8a8a8a"/>
<rect x="108.8" y="382.4" width="1.7" height="1.7" fill="#8a8a8a"/>
<rect x="132.8" y="382.4" width="1.7" height="1.7" fill="#8a8a8a"/>
<rect x="144.8" y="382.4" width="1.7" height="1.7" fill="#8a8a8a"/>
<rect x="156.8" y="382.4" width="1.7" height="1.7" fill="#8a8a8a"/>
<rect x="168.8" y="382.4" width="1.7" height="1.7" fill="#8a8a8a"/>
<rect x="192.8" y="382.4" width="1.7" height="1.7" fill="#8a8a8a"/>
<rect x="204.8" y="382.4" width="1.7" height="1.7" fill="#8a8a8a"/>
<rect x="216.8" y="382.4" width="1.7" height="1.7" fill="#8a8a8a"/>
<rect x="228.8" y="382.4" width="1.7" height="1.7" fill="#8a8a8a"/>
<rect x="252.8" y="382.4" width="1.7" height="1.7" fill="#8a8a8a"/>
<rect x="264.8" y="382.4" width="1.7" height="1.7" fill="#8a8a8a"/>
<rect x="276.8" y="382.4" width="1.7" height="1.7" fill="#8a8a8a"/>
<rect x="288.8" y="382.4" width="1.7" height="1.7" fill="#8a8a8a"/>
<rect x="312.8" y="382.4" width="1.7" height="1.7" fill="#8a8a8a"/>
<rect x="324.8" y="382.4" width="1.7" height="1.7" fill="#8a8a8a"/>
<rect x="336.8" y="382.4" width="1.7" height="1.7" fill="#8a8a8a"/>
<rect x="348.8" y="382.4" width="1.7" height="1.7" fill="#8a8a8a"/>
<rect x="372.8" y="382.4" width="1.7" height="1.7" fill="#8a8a8a"/>
<rect x="384.8" y="382.4" width="1.7" height="1.7" fill="#8a8a8a"/>
<rect x="396.8" y="382.4" width="1.7" height="1.7" fill="#8a8a8a"/>
<rect x="408.8" y="382.4" width="1.7" height="1.7" fill="#8a8a8a"/>
<rect x="432.8" y="382.4" width="1.7" height="1.7" fill="#8a8a8a"/>
<rect x="444.8" y="382.4" width="1.7" height="1.7" fill="#8a8a8a"/>
<rect x="456.8" y="382.4" width="1.7" height="1.7" fill="#8a8a8a"/>
<rect x="468.8" y="382.4" width="1.7" height="1.7" fill="#8a8a8a"/>
<rect x="492.8" y="382.4" width="1.7" height="1.7" fill="#8a8a8a"/>
<rect x="504.8" y="382.4" width="1.7" height="1.7" fill="#8a8a8a"/>
<rect x="516.8" y="382.4" width="1.7" height="1.7" fill="#8a8a8a"/>
<rect x="528.8" y="382.4" width="1.7" height="1.7" fill="#8a8a8a"/>
<rect x="552.8" y="382.4" width="1.7" height="1.7" fill="#8a8a8a"/>
<rect x="564.8" y="382.4" width="1.7" height="1.7" fill="#8a8a8a"/>
<rect x="576.8" y="382.4" width="1.7" height="1.7" fill="#8a8a8a"/>
<rect x="588.8" y="382.4" width="1.7" height="1.7" fill="#8a8a8a"/>
<rect x="612.8" y="382.4" width="1.7" height="1.7" fill="#8a8a8a"/>
<rect x="624.8" y="382.4" width="1.7" height="1.7" fill="#8a8a8a"/>
<rect x="636.8" y="382.4" width="1.7" height="1.7" fill="#8a8a8a"/>
<rect x="648.8" y="382.4" width="1.7" height="1.7" fill="#8a8a8a"/>
<rect x="672.8" y="382.4" width="1.7" height="1.7" fill="#8a8a8a"/>
<rect x="684.8" y="382.4" width="1.7" height="1.7" fill="#8a8a8a"/>
<rect x="696.8" y="382.4" width="1.7" height="1.7" fill="#8a8a8a"/>
<rect x="708.8" y="382.4" width="1.7" height="1.7" fill="#8a8a8a"/>
<rect x="732.8" y="382.4" width="1.7" height="1.7" fill="#8a8a8a"/>
<rect x="744.8" y="382.4" width="1.7" height="1.7" fill="#8a8a8a"/>
<rect x="756.8" y="382.4" width="1.7" height="1.7" fill="#8a8a8a"/>
<rect x="768.8" y="382.4" width="1.7" height="1.7" fill="#8a8a8a"/>
<rect x="792.8" y="382.4" width="1.7" height="1.7" fill="#8a8a8a"/>
<rect x="804.8" y="382.4" width="1.7" height="1.7" fill="#8a8a8a"/>
<rect x="816.8" y="382.4" width="1.7" height="1.7" fill="#8a8a8a"/>
<rect x="828.8" y="382.4" width="1.7" height="1.7" fill="#8a8a8a"/>
<rect x="852.8" y="382.4" width="1.7" height="1.7" fill="#8a8a8a"/>
<rect x="864.8" y="382.4" width="1.7" height="1.7" fill="#8a8a8a"/>
<rect x="876.8" y="382.4" width="1.7" height="1.7" fill="#8a8a8a"/>
<rect x="888.8" y="382.4" width="1.7" height="1.7" fill="#8a8a8a"/>
<rect x="912.8" y="382.4" width="1.7" height="1.7" fill="#8a8a8a"/>
<rect x="924.8" y="382.4" width="1.7" height="1.7" fill="#8a8a8a"/>
<rect x="36.8" y="442.4" width="1.7" height="1.7" fill="#8a8a8a"/>
<rect x="48.8" y="442.4" width="1.7" height="1.7" fill="#8a8a8a"/>
<rect x="72.8" y="442.4" width="1.7" height="1.7" fill="#8a8a8a"/>
<rect x="84.8" y="442.4" width="1.7" height="1.7" fill="#8a8a8a"/>
<rect x="96.8" y="442.4" width="1.7" height="1.7" fill="#8a8a8a"/>
<rect x="108.8" y="442.4" width="1.7" height="1.7" fill="#8a8a8a"/>
<rect x="132.8" y="442.4" width="1.7" height="1.7" fill="#8a8a8a"/>
<rect x="144.8" y="442.4" width="1.7" height="1.7" fill="#8a8a8a"/>
<rect x="156.8" y="442.4" width="1.7" height="1.7" fill="#8a8a8a"/>
<rect x="168.8" y="442.4" width="1.7" height="1.7" fill="#8a8a8a"/>
<rect x="192.8" y="442.4" width="1.7" height="1.7" fill="#8a8a8a"/>
<rect x="204.8" y="442.4" width="1.7" height="1.7" fill="#8a8a8a"/>
<rect x="216.8" y="442.4" width="1.7" height="1.7" fill="#8a8a8a"/>
<rect x="228.8" y="442.4" width="1.7" height="1.7" fill="#8a8a8a"/>
<rect x="252.8" y="442.4" width="1.7" height="1.7" fill="#8a8a8a"/>
<rect x="264.8" y="442.4" width="1.7" height="1.7" fill="#8a8a8a"/>
<rect x="276.8" y="442.4" width="1.7" height="1.7" fill="#8a8a8a"/>
<rect x="288.8" y="442.4" width="1.7" height="1.7" fill="#8a8a8a"/>
<rect x="312.8" y="442.4" width="1.7" height="1.7" fill="#8a8a8a"/>
<rect x="324.8" y="442.4" width="1.7" height="1.7" fill="#8a8a8a"/>
<rect x="336.8" y="442.4" width="1.7" height="1.7" fill="#8a8a8a"/>
<rect x="348.8" y="442.4" width="1.7" height="1.7" fill="#8a8a8a"/>
<rect x="372.8" y="442.4" width="1.7" height="1.7" fill="#8a8a8a"/>
<rect x="384.8" y="442.4" width="1.7" height="1.7" fill="#8a8a8a"/>
<rect x="396.8" y="442.4" width="1.7" height="1.7" fill="#8a8a8a"/>
<rect x="408.8" y="442.4" width="1.7" height="1.7" fill="#8a8a8a"/>
<rect x="432.8" y="442.4" width="1.7" height="1.7" fill="#8a8a8a"/>
<rect x="444.8" y="442.4" width="1.7" height="1.7" fill="#8a8a8a"/>
<rect x="456.8" y="442.4" width="1.7" height="1.7" fill="#8a8a8a"/>
<rect x="468.8" y="442.4" width="1.7" height="1.7" fill="#8a8a8a"/>
<rect x="492.8" y="442.4" width="1.7" height="1.7" fill="#8a8a8a"/>
<rect x="504.8" y="442.4" width="1.7" height="1.7" fill="#8a8a8a"/>
<rect x="516.8" y="442.4" width="1.7" height="1.7" fill="#8a8a8a"/>
<rect x="528.8" y="442.4" width="1.7" height="1.7" fill="#8a8a8a"/>
<rect x="552.8" y="442.4" width="1.7" height="1.7" fill="#8a8a8a"/>
<rect x="564.8" y="442.4" width="1.7" height="1.7" fill="#8a8a8a"/>
<rect x="576.8" y="442.4" width="1.7" height="1.7" fill="#8a8a8a"/>
<rect x="588.8" y="442.4" width="1.7" height="1.7" fill="#8a8a8a"/>
<rect x="612.8" y="442.4" width="1.7" height="1.7" fill="#8a8a8a"/>
<rect x="624.8" y="442.4" width="1.7" height="1.7" fill="#8a8a8a"/>
<rect x="636.8" y="442.4" width="1.7" height="1.7" fill="#8a8a8a"/>
<rect x="648.8" y="442.4" width="1.7" height="1.7" fill="#8a8a8a"/>
<rect x="672.8" y="442.4" width="1.7" height="1.7" fill="#8a8a8a"/>
<rect x="684.8" y="442.4" width="1.7" height="1.7" fill="#8a8a8a"/>
<rect x="696.8" y="442.4" width="1.7" height="1.7" fill="#8a8a8a"/>
<rect x="708.8" y="442.4" width="1.7" height="1.7" fill="#8a8a8a"/>
<rect x="732.8" y="442.4" width="1.7" height="1.7" fill="#8a8a8a"/>
<rect x="744.8" y="442.4" width="1.7" height="1.7" fill="#8a8a8a"/>
<rect x="756.8" y="442.4" width="1.7" height="1.7" fill="#8a8a8a"/>
<rect x="768.8" y="442.4" width="1.7" height="1.7" fill="#8a8a8a"/>
<rect x="792.8" y="442.4" width="1.7" height="1.7" fill="#8a8a8a"/>
<rect x="804.8" y="442.4" width="1.7" height="1.7" fill="#8a8a8a"/>
<rect x="816.8" y="442.4" width="1.7" height="1.7" fill="#8a8a8a"/>
<rect x="828.8" y="442.4" width="1.7" height="1.7" fill="#8a8a8a"/>
<rect x="852.8" y="442.4" width="1.7" height="1.7" fill="#8a8a8a"/>
<rect x="864.8" y="442.4" width="1.7" height="1.7" fill="#8a8a8a"/>
<rect x="876.8" y="442.4" width="1.7" height="1.7" fill="#8a8a8a"/>
<rect x="888.8" y="442.4" width="1.7" height="1.7" fill="#8a8a8a"/>
<rect x="912.8" y="442.4" width="1.7" height="1.7" fill="#8a8a8a"/>
<rect x="924.8" y="442.4" width="1.7" height="1.7" fill="#8a8a8a"/>
<rect x="36.8" y="502.4" width="1.7" height="1.7" fill="#8a8a8a"/>
<rect x="48.8" y="502.4" width="1.7" height="1.7" fill="#8a8a8a"/>
<rect x="72.8" y="502.4" width="1.7" height="1.7" fill="#8a8a8a"/>
<rect x="84.8" y="502.4" width="1.7" height="1.7" fill="#8a8a8a"/>
<rect x="96.8" y="502.4" width="1.7" height="1.7" fill="#8a8a8a"/>
<rect x="108.8" y="502.4" width="1.7" height="1.7" fill="#8a8a8a"/>
<rect x="132.8" y="502.4" width="1.7" height="1.7" fill="#8a8a8a"/>
<rect x="144.8" y="502.4" width="1.7" height="1.7" fill="#8a8a8a"/>
<rect x="156.8" y="502.4" width="1.7" height="1.7" fill="#8a8a8a"/>
<rect x="168.8" y="502.4" width="1.7" height="1.7" fill="#8a8a8a"/>
<rect x="192.8" y="502.4" width="1.7" height="1.7" fill="#8a8a8a"/>
<rect x="204.8" y="502.4" width="1.7" height="1.7" fill="#8a8a8a"/>
<rect x="216.8" y="502.4" width="1.7" height="1.7" fill="#8a8a8a"/>
<rect x="228.8" y="502.4" width="1.7" height="1.7" fill="#8a8a8a"/>
<rect x="252.8" y="502.4" width="1.7" height="1.7" fill="#8a8a8a"/>
<rect x="264.8" y="502.4" width="1.7" height="1.7" fill="#8a8a8a"/>
<rect x="276.8" y="502.4" width="1.7" height="1.7" fill="#8a8a8a"/>
<rect x="288.8" y="502.4" width="1.7" height="1.7" fill="#8a8a8a"/>
<rect x="312.8" y="502.4" width="1.7" height="1.7" fill="#8a8a8a"/>
<rect x="324.8" y="502.4" width="1.7" height="1.7" fill="#8a8a8a"/>
<rect x="336.8" y="502.4" width="1.7" height="1.7" fill="#8a8a8a"/>
<rect x="348.8" y="502.4" width="1.7" height="1.7" fill="#8a8a8a"/>
<rect x="372.8" y="502.4" width="1.7" height="1.7" fill="#8a8a8a"/>
<rect x="384.8" y="502.4" width="1.7" height="1.7" fill="#8a8a8a"/>
<rect x="396.8" y="502.4" width="1.7" height="1.7" fill="#8a8a8a"/>
<rect x="408.8" y="502.4" width="1.7" height="1.7" fill="#8a8a8a"/>
<rect x="432.8" y="502.4" width="1.7" height="1.7" fill="#8a8a8a"/>
<rect x="444.8" y="502.4" width="1.7" height="1.7" fill="#8a8a8a"/>
<rect x="456.8" y="502.4" width="1.7" height="1.7" fill="#8a8a8a"/>
<rect x="468.8" y="502.4" width="1.7" height="1.7" fill="#8a8a8a"/>
<rect x="492.8" y="502.4" width="1.7" height="1.7" fill="#8a8a8a"/>
<rect x="504.8" y="502.4" width="1.7" height="1.7" fill="#8a8a8a"/>
<rect x="516.8" y="502.4" width="1.7" height="1.7" fill="#8a8a8a"/>
<rect x="528.8" y="502.4" width="1.7" height="1.7" fill="#8a8a8a"/>
<rect x="552.8" y="502.4" width="1.7" height="1.7" fill="#8a8a8a"/>
<rect x="564.8" y="502.4" width="1.7" height="1.7" fill="#8a8a8a"/>
<rect x="576.8" y="502.4" width="1.7" height="1.7" fill="#8a8a8a"/>
<rect x="588.8" y="502.4" width="1.7" height="1.7" fill="#8a8a8a"/>
<rect x="612.8" y="502.4" width="1.7" height="1.7" fill="#8a8a8a"/>
<rect x="624.8" y="502.4" width="1.7" height="1.7" fill="#8a8a8a"/>
<rect x="636.8" y="502.4" width="1.7" height="1.7" fill="#8a8a8a"/>
<rect x="648.8" y="502.4" width="1.7" height="1.7" fill="#8a8a8a"/>
<rect x="672.8" y="502.4" width="1.7" height="1.7" fill="#8a8a8a"/>
<rect x="684.8" y="502.4" width="1.7" height="1.7" fill="#8a8a8a"/>
<rect x="696.8" y="502.4" width="1.7" height="1.7" fill="#8a8a8a"/>
<rect x="708.8" y="502.4" width="1.7" height="1.7" fill="#8a8a8a"/>
<rect x="732.8" y="502.4" width="1.7" height="1.7" fill="#8a8a8a"/>
<rect x="744.8" y="502.4" width="1.7" height="1.7" fill="#8a8a8a"/>
<rect x="756.8" y="502.4" width="1.7" height="1.7" fill="#8a8a8a"/>
<rect x="768.8" y="502.4" width="1.7" height="1.7" fill="#8a8a8a"/>
<rect x="792.8" y="502.4" width="1.7" height="1.7" fill="#8a8a8a"/>
<rect x="804.8" y="502.4" width="1.7" height="1.7" fill="#8a8a8a"/>
<rect x="816.8" y="502.4" width="1.7" height="1.7" fill="#8a8a8a"/>
<rect x="828.8" y="502.4" width="1.7" height="1.7" fill="#8a8a8a"/>
<rect x="852.8" y="502.4" width="1.7" height="1.7" fill="#8a8a8a"/>
<rect x="864.8" y="502.4" width="1.7" height="1.7" fill="#8a8a8a"/>
<rect x="876.8" y="502.4" width="1.7" height="1.7" fill="#8a8a8a"/>
<rect x="888.8" y="502.4" width="1.7" height="1.7" fill="#8a8a8a"/>
<rect x="912.8" y="502.4" width="1.7" height="1.7" fill="#8a8a8a"/>
<rect x="924.8" y="502.4" width="1.7" height="1.7" fill="#8a8a8a"/>
<rect x="36.8" y="562.4" width="1.7" height="1.7" fill="#8a8a8a"/>
<rect x="48.8" y="562.4" width="1.7" height="1.7" fill="#8a8a8a"/>
<rect x="72.8" y="562.4" width="1.7" height="1.7" fill="#8a8a8a"/>
<rect x="84.8" y="562.4" width="1.7" height="1.7" fill="#8a8a8a"/>
<rect x="96.8" y="562.4" width="1.7" height="1.7" fill="#8a8a8a"/>
<rect x="108.8" y="562.4" width="1.7" height="1.7" fill="#8a8a8a"/>
<rect x="132.8" y="562.4" width="1.7" height="1.7" fill="#8a8a8a"/>
<rect x="144.8" y="562.4" width="1.7" height="1.7" fill="#8a8a8a"/>
<rect x="156.8" y="562.4" width="1.7" height="1.7" fill="#8a8a8a"/>
<rect x="168.8" y="562.4" width="1.7" height="1.7" fill="#8a8a8a"/>
<rect x="192.8" y="562.4" width="1.7" height="1.7" fill="#8a8a8a"/>
<rect x="204.8" y="562.4" width="1.7" height="1.7" fill="#8a8a8a"/>
<rect x="216.8" y="562.4" width="1.7" height="1.7" fill="#8a8a8a"/>
<rect x="228.8" y="562.4" width="1.7" height="1.7" fill="#8a8a8a"/>
<rect x="252.8" y="562.4" width="1.7" height="1.7" fill="#8a8a8a"/>
<rect x="264.8" y="562.4" width="1.7" height="1.7" fill="#8a8a8a"/>
<rect x="276.8" y="562.4" width="1.7" height="1.7" fill="#8a8a8a"/>
<rect x="288.8" y="562.4" width="1.7" height="1.7" fill="#8a8a8a"/>
<rect x="312.8" y="562.4" width="1.7" height="1.7" fill="#8a8a8a"/>
<rect x="324.8" y="562.4" width="1.7" height="1.7" fill="#8a8a8a"/>
<rect x="336.8" y="562.4" width="1.7" height="1.7" fill="#8a8a8a"/>
<rect x="348.8" y="562.4" width="1.7" height="1.7" fill="#8a8a8a"/>
<rect x="372.8" y="562.4" width="1.7" height="1.7" fill="#8a8a8a"/>
<rect x="384.8" y="562.4" width="1.7" height="1.7" fill="#8a8a8a"/>
<rect x="396.8" y="562.4" width="1.7" height="1.7" fill="#8a8a8a"/>
<rect x="408.8" y="562.4" width="1.7" height="1.7" fill="#8a8a8a"/>
<rect x="432.8" y="562.4" width="1.7" height="1.7" fill="#8a8a8a"/>
<rect x="444.8" y="562.4" width="1.7" height="1.7" fill="#8a8a8a"/>
<rect x="456.8" y="562.4" width="1.7" height="1.7" fill="#8a8a8a"/>
<rect x="468.8" y="562.4" width="1.7" height="1.7" fill="#8a8a8a"/>
<rect x="492.8" y="562.4" width="1.7" height="1.7" fill="#8a8a8a"/>
<rect x="504.8" y="562.4" width="1.7" height="1.7" fill="#8a8a8a"/>
<rect x="516.8" y="562.4" width="1.7" height="1.7" fill="#8a8a8a"/>
<rect x="528.8" y="562.4" width="1.7" height="1.7" fill="#8a8a8a"/>
<rect x="552.8" y="562.4" width="1.7" height="1.7" fill="#8a8a8a"/>
<rect x="564.8" y="562.4" width="1.7" height="1.7" fill="#8a8a8a"/>
<rect x="576.8" y="562.4" width="1.7" height="1.7" fill="#8a8a8a"/>
<rect x="588.8" y="562.4" width="1.7" height="1.7" fill="#8a8a8a"/>
<rect x="612.8" y="562.4" width="1.7" height="1.7" fill="#8a8a8a"/>
<rect x="624.8" y="562.4" width="1.7" height="1.7" fill="#8a8a8a"/>
<rect x="636.8" y="562.4" width="1.7" height="1.7" fill="#8a8a8a"/>
<rect x="648.8" y="562.4" width="1.7" height="1.7" fill="#8a8a8a"/>
<rect x="672.8" y="562.4" width="1.7" height="1.7" fill="#8a8a8a"/>
<rect x="684.8" y="562.4" width="1.7" height="1.7" fill="#8a8a8a"/>
<rect x="696.8" y="562.4" width="1.7" height="1.7" fill="#8a8a8a"/>
<rect x="708.8" y="562.4" width="1.7" height="1.7" fill="#8a8a8a"/>
<rect x="732.8" y="562.4" width="1.7" height="1.7" fill="#8a8a8a"/>
<rect x="744.8" y="562.4" width="1.7" height="1.7" fill="#8a8a8a"/>
<rect x="756.8" y="562.4" width="1.7" height="1.7" fill="#8a8a8a"/>
<rect x="768.8" y="562.4" width="1.7" height="1.7" fill="#8a8a8a"/>
<rect x="792.8" y="562.4" width="1.7" height="1.7" fill="#8a8a8a"/>
<rect x="804.8" y="562.4" width="1.7" height="1.7" fill="#8a8a8a"/>
<rect x="816.8" y="562.4" width="1.7" height="1.7" fill="#8a8a8a"/>
<rect x="828.8" y="562.4" width="1.7" height="1.7" fill="#8a8a8a"/>
<rect x="852.8" y="562.4" width="1.7" height="1.7" fill="#8a8a8a"/>
<rect x="864.8" y="562.4" width="1.7" height="1.7" fill="#8a8a8a"/>
<rect x="876.8" y="562.4" width="1.7" height="1.7" fill="#8a8a8a"/>
<rect x="888.8" y="562.4" width="1.7" height="1.7" fill="#8a8a8a"/>
<rect x="912.8" y="562.4" width="1.7" height="1.7" fill="#8a8a8a"/>
<rect x="924.8" y="562.4" width="1.7" height="1.7" fill="#8a8a8a"/>
<rect x="479.7" y="34.3" width="4" height="1.8" fill="#dcdcdc"/>
<rect x="479.7" y="46.3" width="4" height="1.8" fill="#dcdcdc"/>
<rect x="479.7" y="58.3" width="4" height="1.8" fill="#dcdcdc"/>
<rect x="479.7" y="70.3" width="4" height="1.8" fill="#dcdcdc"/>
<rect x="479.7" y="82.3" width="4" height="1.8" fill="#dcdcdc"/>
<rect x="479.7" y="94.3" width="4" height="1.8" fill="#dcdcdc"/>
<rect x="479.7" y="106.3" width="4" height="1.8" fill="#dcdcdc"/>
<rect x="479.7" y="118.3" width="4" height="1.8" fill="#dcdcdc"/>
<rect x="479.7" y="130.3" width="4" height="1.8" fill="#dcdcdc"/>
<rect x="479.7" y="142.3" width="4" height="1.8" fill="#dcdcdc"/>
<rect x="479.7" y="154.3" width="4" height="1.8" fill="#dcdcdc"/>
<rect x="479.7" y="166.3" width="4" height="1.8" fill="#dcdcdc"/>
<rect x="479.7" y="178.3" width="4" height="1.8" fill="#dcdcdc"/>
<rect x="479.7" y="190.3" width="4" height="1.8" fill="#dcdcdc"/>
<rect x="479.7" y="202.3" width="4" height="1.8" fill="#dcdcdc"/>
<rect x="479.7" y="214.3" width="4" height="1.8" fill="#dcdcdc"/>
<rect x="479.7" y="226.3" width="4" height="1.8" fill="#dcdcdc"/>
<rect x="479.7" y="238.3" width="4" height="1.8" fill="#dcdcdc"/>
<rect x="479.7" y="250.3" width="4" height="1.8" fill="#dcdcdc"/>
<rect x="479.7" y="262.3" width="4" height="1.8" fill="#dcdcdc"/>
<rect x="479.7" y="274.3" width="4" height="1.8" fill="#dcdcdc"/>
<rect x="479.7" y="286.3" width="4" height="1.8" fill="#dcdcdc"/>
<rect x="479.7" y="298.3" width="4" height="1.8" fill="#dcdcdc"/>
<rect x="479.7" y="310.3" width="4" height="1.8" fill="#dcdcdc"/>
<rect x="479.7" y="334.3" width="4" height="1.8" fill="#dcdcdc"/>
<rect x="479.7" y="346.3" width="4" height="1.8" fill="#dcdcdc"/>
<rect x="479.7" y="358.3" width="4" height="1.8" fill="#dcdcdc"/>
<rect x="479.7" y="370.3" width="4" height="1.8" fill="#dcdcdc"/>
<rect x="479.7" y="382.3" width="4" height="1.8" fill="#dcdcdc"/>
<rect x="479.7" y="394.3" width="4" height="1.8" fill="#dcdcdc"/>
<rect x="479.7" y="406.3" width="4" height="1.8" fill="#dcdcdc"/>
<rect x="479.7" y="418.3" width="4" height="1.8" fill="#dcdcdc"/>
<rect x="479.7" y="430.3" width="4" height="1.8" fill="#dcdcdc"/>
<rect x="479.7" y="442.3" width="4" height="1.8" fill="#dcdcdc"/>
<rect x="479.7" y="454.3" width="4" height="1.8" fill="#dcdcdc"/>
<rect x="479.7" y="466.3" width="4" height="1.8" fill="#dcdcdc"/>
<rect x="479.7" y="478.3" width="4" height="1.8" fill="#dcdcdc"/>
<rect x="479.7" y="490.3" width="4" height="1.8" fill="#dcdcdc"/>
<rect x="479.7" y="502.3" width="4" height="1.8" fill="#dcdcdc"/>
<rect x="479.7" y="514.3" width="4" height="1.8" fill="#dcdcdc"/>
<rect x="479.7" y="526.3" width="4" height="1.8" fill="#dcdcdc"/>
<rect x="479.7" y="538.3" width="4" height="1.8" fill="#dcdcdc"/>
<rect x="479.7" y="550.3" width="4" height="1.8" fill="#dcdcdc"/>
<rect x="479.7" y="562.3" width="4" height="1.8" fill="#dcdcdc"/>
<rect x="479.7" y="574.3" width="4" height="1.8" fill="#dcdcdc"/>
<rect x="479.7" y="586.3" width="4" height="1.8" fill="#dcdcdc"/>
<rect x="479.7" y="598.3" width="4" height="1.8" fill="#dcdcdc"/>
<rect x="479.7" y="610.3" width="4" height="1.8" fill="#dcdcdc"/>
<rect x="36.7" y="321.3" width="1.8" height="4" fill="#dcdcdc"/>
<rect x="48.7" y="321.3" width="1.8" height="4" fill="#dcdcdc"/>
<rect x="60.7" y="321.3" width="1.8" height="4" fill="#dcdcdc"/>
<rect x="72.7" y="321.3" width="1.8" height="4" fill="#dcdcdc"/>
<rect x="84.7" y="321.3" width="1.8" height="4" fill="#dcdcdc"/>
<rect x="96.7" y="321.3" width="1.8" height="4" fill="#dcdcdc"/>
<rect x="108.7" y="321.3" width="1.8" height="4" fill="#dcdcdc"/>
<rect x="120.7" y="321.3" width="1.8" height="4" fill="#dcdcdc"/>
<rect x="132.7" y="321.3" width="1.8" height="4" fill="#dcdcdc"/>
<rect x="144.7" y="321.3" width="1.8" height="4" fill="#dcdcdc"/>
<rect x="156.7" y="321.3" width="1.8" height="4" fill="#dcdcdc"/>
<rect x="168.7" y="321.3" width="1.8" height="4" fill="#dcdcdc"/>
<rect x="192.7" y="321.3" width="1.8" height="4" fill="#dcdcdc"/>
<rect x="204.7" y="321.3" width="1.8" height="4" fill="#dcdcdc"/>
<rect x="216.7" y="321.3" width="1.8" height="4" fill="#dcdcdc"/>
<rect x="228.7" y="321.3" width="1.8" height="4" fill="#dcdcdc"/>
<rect x="240.7" y="321.3" width="1.8" height="4" fill="#dcdcdc"/>
<rect x="252.7" y="321.3" width="1.8" height="4" fill="#dcdcdc"/>
<rect x="264.7" y="321.3" width="1.8" height="4" fill="#dcdcdc"/>
<rect x="276.7" y="321.3" width="1.8" height="4" fill="#dcdcdc"/>
<rect x="288.7" y="321.3" width="1.8" height="4" fill="#dcdcdc"/>
<rect x="300.7" y="321.3" width="1.8" height="4" fill="#dcdcdc"/>
<rect x="312.7" y="321.3" width="1.8" height="4" fill="#dcdcdc"/>
<rect x="324.7" y="321.3" width="1.8" height="4" fill="#dcdcdc"/>
<rect x="336.7" y="321.3" width="1.8" height="4" fill="#dcdcdc"/>
<rect x="348.7" y="321.3" width="1.8" height="4" fill="#dcdcdc"/>
<rect x="360.7" y="321.3" width="1.8" height="4" fill="#dcdcdc"/>
<rect x="372.7" y="321.3" width="1.8" height="4" fill="#dcdcdc"/>
<rect x="384.7" y="321.3" width="1.8" height="4" fill="#dcdcdc"/>
<rect x="396.7" y="321.3" width="1.8" height="4" fill="#dcdcdc"/>
<rect x="408.7" y="321.3" width="1.8" height="4" fill="#dcdcdc"/>
<rect x="420.7" y="321.3" width="1.8" height="4" fill="#dcdcdc"/>
<rect x="432.7" y="321.3" width="1.8" height="4" fill="#dcdcdc"/>
<rect x="444.7" y="321.3" width="1.8" height="4" fill="#dcdcdc"/>
<rect x="456.7" y="321.3" width="1.8" height="4" fill="#dcdcdc"/>
<rect x="468.7" y="321.3" width="1.8" height="4" fill="#dcdcdc"/>
<rect x="492.7" y="321.3" width="1.8" height="4" fill="#dcdcdc"/>
<rect x="504.7" y="321.3" width="1.8" height="4" fill="#dcdcdc"/>
<rect x="516.7" y="321.3" width="1.8" height="4" fill="#dcdcdc"/>
<rect x="528.7" y="321.3" width="1.8" height="4" fill="#dcdcdc"/>
<rect x="540.7" y="321.3" width="1.8" height="4" fill="#dcdcdc"/>
<rect x="552.7" y="321.3" width="1.8" height="4" fill="#dcdcdc"/>
<rect x="564.7" y="321.3" width="1.8" height="4" fill="#dcdcdc"/>
<rect x="576.7" y="321.3" width="1.8" height="4" fill="#dcdcdc"/>
<rect x="588.7" y="321.3" width="1.8" height="4" fill="#dcdcdc"/>
<rect x="600.7" y="321.3" width="1.8" height="4" fill="#dcdcdc"/>
<rect x="612.7" y="321.3" width="1.8" height="4" fill="#dcdcdc"/>
<rect x="624.7" y="321.3" width="1.8" height="4" fill="#dcdcdc"/>
<rect x="636.7" y="321.3" width="1.8" height="4" fill="#dcdcdc"/>
<rect x="648.7" y="321.3" width="1.8" height="4" fill="#dcdcdc"/>
<rect x="660.7" y="321.3" width="1.8" height="4" fill="#dcdcdc"/>
<rect x="672.7" y="321.3" width="1.8" height="4" fill="#dcdcdc"/>
<rect x="684.7" y="321.3" width="1.8" height="4" fill="#dcdcdc"/>
<rect x="696.7" y="321.3" width="1.8" height="4" fill="#dcdcdc"/>
<rect x="708.7" y="321.3" width="1.8" height="4" fill="#dcdcdc"/>
<rect x="720.7" y="321.3" width="1.8" height="4" fill="#dcdcdc"/>
<rect x="732.7" y="321.3" width="1.8" height="4" fill="#dcdcdc"/>
<rect x="744.7" y="321.3" width="1.8" height="4" fill="#dcdcdc"/>
<rect x="756.7" y="321.3" width="1.8" height="4" fill="#dcdcdc"/>
<rect x="768.7" y="321.3" width="1.8" height="4" fill="#dcdcdc"/>
<rect x="792.7" y="321.3" width="1.8" height="4" fill="#dcdcdc"/>
<rect x="804.7" y="321.3" width="1.8" height="4" fill="#dcdcdc"/>
<rect x="816.7" y="321.3" width="1.8" height="4" fill="#dcdcdc"/>
<rect x="828.7" y="321.3" width="1.8" height="4" fill="#dcdcdc"/>
<rect x="840.7" y="321.3" width="1.8" height="4" fill="#dcdcdc"/>
<rect x="852.7" y="321.3" width="1.8" height="4" fill="#dcdcdc"/>
<rect x="864.7" y="321.3" width="1.8" height="4" fill="#dcdcdc"/>
<rect x="876.7" y="321.3" width="1.8" height="4" fill="#dcdcdc"/>
<rect x="888.7" y="321.3" width="1.8" height="4" fill="#dcdcdc"/>
<rect x="900.7" y="321.3" width="1.8" height="4" fill="#dcdcdc"/>
<rect x="912.7" y="321.3" width="1.8" height="4" fill="#dcdcdc"/>
<rect x="924.7" y="321.3" width="1.8" height="4" fill="#dcdcdc"/>
<rect x="479.7" y="321.3" width="4" height="4" fill="#f0f0f0"/>
<rect x="175.2" y="322.4" width="13" height="1.8" fill="#f0f0f0"/>
<rect x="180.8" y="316.8" width="1.8" height="13" fill="#f0f0f0"/>
<rect x="775.2" y="322.4" width="13" height="1.8" fill="#f0f0f0"/>
<rect x="780.8" y="316.8" width="1.8" height="13" fill="#f0f0f0"/>
<rect x="36.8" y="25" width="1.7" height="3" fill="#e8e8e8"/>
<rect x="36.8" y="618" width="1.7" height="3" fill="#e8e8e8"/>
<rect x="48.8" y="25" width="1.7" height="3" fill="#e8e8e8"/>
<rect x="48.8" y="618" width="1.7" height="3" fill="#e8e8e8"/>
<rect x="60.8" y="25" width="1.7" height="6" fill="#e8e8e8"/>
<rect x="60.8" y="615" width="1.7" height="6" fill="#e8e8e8"/>
<rect x="72.8" y="25" width="1.7" height="3" fill="#e8e8e8"/>
<rect x="72.8" y="618" width="1.7" height="3" fill="#e8e8e8"/>
<rect x="84.8" y="25" width="1.7" height="3" fill="#e8e8e8"/>
<rect x="84.8" y="618" width="1.7" height="3" fill="#e8e8e8"/>
<rect x="96.8" y="25" width="1.7" height="3" fill="#e8e8e8"/>
<rect x="96.8" y="618" width="1.7" height="3" fill="#e8e8e8"/>
<rect x="108.8" y="25" width="1.7" height="3" fill="#e8e8e8"/>
<rect x="108.8" y="618" width="1.7" height="3" fill="#e8e8e8"/>
<rect x="120.8" y="25" width="1.7" height="6" fill="#e8e8e8"/>
<rect x="120.8" y="615" width="1.7" height="6" fill="#e8e8e8"/>
<rect x="132.8" y="25" width="1.7" height="3" fill="#e8e8e8"/>
<rect x="132.8" y="618" width="1.7" height="3" fill="#e8e8e8"/>
<rect x="144.8" y="25" width="1.7" height="3" fill="#e8e8e8"/>
<rect x="144.8" y="618" width="1.7" height="3" fill="#e8e8e8"/>
<rect x="156.8" y="25" width="1.7" height="3" fill="#e8e8e8"/>
<rect x="156.8" y="618" width="1.7" height="3" fill="#e8e8e8"/>
<rect x="168.8" y="25" width="1.7" height="3" fill="#e8e8e8"/>
<rect x="168.8" y="618" width="1.7" height="3" fill="#e8e8e8"/>
<rect x="180.8" y="25" width="1.7" height="6" fill="#e8e8e8"/>
<rect x="180.8" y="615" width="1.7" height="6" fill="#e8e8e8"/>
<rect x="192.8" y="25" width="1.7" height="3" fill="#e8e8e8"/>
<rect x="192.8" y="618" width="1.7" height="3" fill="#e8e8e8"/>
<rect x="204.8" y="25" width="1.7" height="3" fill="#e8e8e8"/>
<rect x="204.8" y="618" width="1.7" height="3" fill="#e8e8e8"/>
<rect x="216.8" y="25" width="1.7" height="3" fill="#e8e8e8"/>
<rect x="216.8" y="618" width="1.7" height="3" fill="#e8e8e8"/>
<rect x="228.8" y="25" width="1.7" height="3" fill="#e8e8e8"/>
<rect x="228.8" y="618" width="1.7" height="3" fill="#e8e8e8"/>
<rect x="240.8" y="25" width="1.7" height="6" fill="#e8e8e8"/>
<rect x="240.8" y="615" width="1.7" height="6" fill="#e8e8e8"/>
<rect x="252.8" y="25" width="1.7" height="3" fill="#e8e8e8"/>
<rect x="252.8" y="618" width="1.7" height="3" fill="#e8e8e8"/>
<rect x="264.8" y="25" width="1.7" height="3" fill="#e8e8e8"/>
<rect x="264.8" y="618" width="1.7" height="3" fill="#e8e8e8"/>
<rect x="276.8" y="25" width="1.7" height="3" fill="#e8e8e8"/>
<rect x="276.8" y="618" width="1.7" height="3" fill="#e8e8e8"/>
<rect x="288.8" y="25" width="1.7" height="3" fill="#e8e8e8"/>
<rect x="288.8" y="618" width="1.7" height="3" fill="#e8e8e8"/>
<rect x="300.8" y="25" width="1.7" height="6" fill="#e8e8e8"/>
<rect x="300.8" y="615" width="1.7" height="6" fill="#e8e8e8"/>
<rect x="312.8" y="25" width="1.7" height="3" fill="#e8e8e8"/>
<rect x="312.8" y="618" width="1.7" height="3" fill="#e8e8e8"/>
<rect x="324.8" y="25" width="1.7" height="3" fill="#e8e8e8"/>
<rect x="324.8" y="618" width="1.7" height="3" fill="#e8e8e8"/>
<rect x="336.8" y="25" width="1.7" height="3" fill="#e8e8e8"/>
<rect x="336.8" y="618" width="1.7" height="3" fill="#e8e8e8"/>
<rect x="348.8" y="25" width="1.7" height="3" fill="#e8e8e8"/>
<rect x="348.8" y="618" width="1.7" height="3" fill="#e8e8e8"/>
<rect x="360.8" y="25" width="1.7" height="6" fill="#e8e8e8"/>
<rect x="360.8" y="615" width="1.7" height="6" fill="#e8e8e8"/>
<rect x="372.8" y="25" width="1.7" height="3" fill="#e8e8e8"/>
<rect x="372.8" y="618" width="1.7" height="3" fill="#e8e8e8"/>
<rect x="384.8" y="25" width="1.7" height="3" fill="#e8e8e8"/>
<rect x="384.8" y="618" width="1.7" height="3" fill="#e8e8e8"/>
<rect x="396.8" y="25" width="1.7" height="3" fill="#e8e8e8"/>
<rect x="396.8" y="618" width="1.7" height="3" fill="#e8e8e8"/>
<rect x="408.8" y="25" width="1.7" height="3" fill="#e8e8e8"/>
<rect x="408.8" y="618" width="1.7" height="3" fill="#e8e8e8"/>
<rect x="420.8" y="25" width="1.7" height="6" fill="#e8e8e8"/>
<rect x="420.8" y="615" width="1.7" height="6" fill="#e8e8e8"/>
<rect x="432.8" y="25" width="1.7" height="3" fill="#e8e8e8"/>
<rect x="432.8" y="618" width="1.7" height="3" fill="#e8e8e8"/>
<rect x="444.8" y="25" width="1.7" height="3" fill="#e8e8e8"/>
<rect x="444.8" y="618" width="1.7" height="3" fill="#e8e8e8"/>
<rect x="456.8" y="25" width="1.7" height="3" fill="#e8e8e8"/>
<rect x="456.8" y="618" width="1.7" height="3" fill="#e8e8e8"/>
<rect x="468.8" y="25" width="1.7" height="3" fill="#e8e8e8"/>
<rect x="468.8" y="618" width="1.7" height="3" fill="#e8e8e8"/>
<rect x="480.8" y="25" width="1.7" height="6" fill="#e8e8e8"/>
<rect x="480.8" y="615" width="1.7" height="6" fill="#e8e8e8"/>
<rect x="492.8" y="25" width="1.7" height="3" fill="#e8e8e8"/>
<rect x="492.8" y="618" width="1.7" height="3" fill="#e8e8e8"/>
<rect x="504.8" y="25" width="1.7" height="3" fill="#e8e8e8"/>
<rect x="504.8" y="618" width="1.7" height="3" fill="#e8e8e8"/>
<rect x="516.9" y="25" width="1.7" height="3" fill="#e8e8e8"/>
<rect x="516.9" y="618" width="1.7" height="3" fill="#e8e8e8"/>
<rect x="528.9" y="25" width="1.7" height="3" fill="#e8e8e8"/>
<rect x="528.9" y="618" width="1.7" height="3" fill="#e8e8e8"/>
<rect x="540.9" y="25" width="1.7" height="6" fill="#e8e8e8"/>
<rect x="540.9" y="615" width="1.7" height="6" fill="#e8e8e8"/>
<rect x="552.9" y="25" width="1.7" height="3" fill="#e8e8e8"/>
<rect x="552.9" y="618" width="1.7" height="3" fill="#e8e8e8"/>
<rect x="564.9" y="25" width="1.7" height="3" fill="#e8e8e8"/>
<rect x="564.9" y="618" width="1.7" height="3" fill="#e8e8e8"/>
<rect x="576.9" y="25" width="1.7" height="3" fill="#e8e8e8"/>
<rect x="576.9" y="618" width="1.7" height="3" fill="#e8e8e8"/>
<rect x="588.9" y="25" width="1.7" height="3" fill="#e8e8e8"/>
<rect x="588.9" y="618" width="1.7" height="3" fill="#e8e8e8"/>
<rect x="600.9" y="25" width="1.7" height="6" fill="#e8e8e8"/>
<rect x="600.9" y="615" width="1.7" height="6" fill="#e8e8e8"/>
<rect x="612.9" y="25" width="1.7" height="3" fill="#e8e8e8"/>
<rect x="612.9" y="618" width="1.7" height="3" fill="#e8e8e8"/>
<rect x="624.9" y="25" width="1.7" height="3" fill="#e8e8e8"/>
<rect x="624.9" y="618" width="1.7" height="3" fill="#e8e8e8"/>
<rect x="636.9" y="25" width="1.7" height="3" fill="#e8e8e8"/>
<rect x="636.9" y="618" width="1.7" height="3" fill="#e8e8e8"/>
<rect x="648.9" y="25" width="1.7" height="3" fill="#e8e8e8"/>
<rect x="648.9" y="618" width="1.7" height="3" fill="#e8e8e8"/>
<rect x="660.9" y="25" width="1.7" height="6" fill="#e8e8e8"/>
<rect x="660.9" y="615" width="1.7" height="6" fill="#e8e8e8"/>
<rect x="672.9" y="25" width="1.7" height="3" fill="#e8e8e8"/>
<rect x="672.9" y="618" width="1.7" height="3" fill="#e8e8e8"/>
<rect x="684.9" y="25" width="1.7" height="3" fill="#e8e8e8"/>
<rect x="684.9" y="618" width="1.7" height="3" fill="#e8e8e8"/>
<rect x="696.9" y="25" width="1.7" height="3" fill="#e8e8e8"/>
<rect x="696.9" y="618" width="1.7" height="3" fill="#e8e8e8"/>
<rect x="708.9" y="25" width="1.7" height="3" fill="#e8e8e8"/>
<rect x="708.9" y="618" width="1.7" height="3" fill="#e8e8e8"/>
<rect x="720.9" y="25" width="1.7" height="6" fill="#e8e8e8"/>
<rect x="720.9" y="615" width="1.7" height="6" fill="#e8e8e8"/>
<rect x="732.9" y="25" width="1.7" height="3" fill="#e8e8e8"/>
<rect x="732.9" y="618" width="1.7" height="3" fill="#e8e8e8"/>
<rect x="744.9" y="25" width="1.7" height="3" fill="#e8e8e8"/>
<rect x="744.9" y="618" width="1.7" height="3" fill="#e8e8e8"/>
<rect x="756.9" y="25" width="1.7" height="3" fill="#e8e8e8"/>
<rect x="756.9" y="618" width="1.7" height="3" fill="#e8e8e8"/>
<rect x="768.9" y="25" width="1.7" height="3" fill="#e8e8e8"/>
<rect x="768.9" y="618" width="1.7" height="3" fill="#e8e8e8"/>
<rect x="780.9" y="25" width="1.7" height="6" fill="#e8e8e8"/>
<rect x="780.9" y="615" width="1.7" height="6" fill="#e8e8e8"/>
<rect x="792.9" y="25" width="1.7" height="3" fill="#e8e8e8"/>
<rect x="792.9" y="618" width="1.7" height="3" fill="#e8e8e8"/>
<rect x="804.9" y="25" width="1.7" height="3" fill="#e8e8e8"/>
<rect x="804.9" y="618" width="1.7" height="3" fill="#e8e8e8"/>
<rect x="816.9" y="25" width="1.7" height="3" fill="#e8e8e8"/>
<rect x="816.9" y="618" width="1.7" height="3" fill="#e8e8e8"/>
<rect x="828.9" y="25" width="1.7" height="3" fill="#e8e8e8"/>
<rect x="828.9" y="618" width="1.7" height="3" fill="#e8e8e8"/>
<rect x="840.9" y="25" width="1.7" height="6" fill="#e8e8e8"/>
<rect x="840.9" y="615" width="1.7" height="6" fill="#e8e8e8"/>
<rect x="852.9" y="25" width="1.7" height="3" fill="#e8e8e8"/>
<rect x="852.9" y="618" width="1.7" height="3" fill="#e8e8e8"/>
<rect x="864.9" y="25" width="1.7" height="3" fill="#e8e8e8"/>
<rect x="864.9" y="618" width="1.7" height="3" fill="#e8e8e8"/>
<rect x="876.9" y="25" width="1.7" height="3" fill="#e8e8e8"/>
<rect x="876.9" y="618" width="1.7" height="3" fill="#e8e8e8"/>
<rect x="888.9" y="25" width="1.7" height="3" fill="#e8e8e8"/>
<rect x="888.9" y="618" width="1.7" height="3" fill="#e8e8e8"/>
<rect x="900.9" y="25" width="1.7" height="6" fill="#e8e8e8"/>
<rect x="900.9" y="615" width="1.7" height="6" fill="#e8e8e8"/>
<rect x="912.9" y="25" width="1.7" height="3" fill="#e8e8e8"/>
<rect x="912.9" y="618" width="1.7" height="3" fill="#e8e8e8"/>
<rect x="924.9" y="25" width="1.7" height="3" fill="#e8e8e8"/>
<rect x="924.9" y="618" width="1.7" height="3" fill="#e8e8e8"/>
<rect x="26" y="34.5" width="4" height="1.7" fill="#e8e8e8"/>
<rect x="930" y="34.5" width="4" height="1.7" fill="#e8e8e8"/>
<rect x="26" y="46.5" width="4" height="1.7" fill="#e8e8e8"/>
<rect x="930" y="46.5" width="4" height="1.7" fill="#e8e8e8"/>
<rect x="26" y="58.5" width="4" height="1.7" fill="#e8e8e8"/>
<rect x="930" y="58.5" width="4" height="1.7" fill="#e8e8e8"/>
<rect x="26" y="70.5" width="4" height="1.7" fill="#e8e8e8"/>
<rect x="930" y="70.5" width="4" height="1.7" fill="#e8e8e8"/>
<rect x="26" y="82.5" width="6" height="1.7" fill="#e8e8e8"/>
<rect x="928" y="82.5" width="6" height="1.7" fill="#e8e8e8"/>
<rect x="26" y="94.5" width="4" height="1.7" fill="#e8e8e8"/>
<rect x="930" y="94.5" width="4" height="1.7" fill="#e8e8e8"/>
<rect x="26" y="106.5" width="4" height="1.7" fill="#e8e8e8"/>
<rect x="930" y="106.5" width="4" height="1.7" fill="#e8e8e8"/>
<rect x="26" y="118.5" width="4" height="1.7" fill="#e8e8e8"/>
<rect x="930" y="118.5" width="4" height="1.7" fill="#e8e8e8"/>
<rect x="26" y="130.5" width="4" height="1.7" fill="#e8e8e8"/>
<rect x="930" y="130.5" width="4" height="1.7" fill="#e8e8e8"/>
<rect x="26" y="142.5" width="6" height="1.7" fill="#e8e8e8"/>
<rect x="928" y="142.5" width="6" height="1.7" fill="#e8e8e8"/>
<rect x="26" y="154.5" width="4" height="1.7" fill="#e8e8e8"/>
<rect x="930" y="154.5" width="4" height="1.7" fill="#e8e8e8"/>
<rect x="26" y="166.5" width="4" height="1.7" fill="#e8e8e8"/>
<rect x="930" y="166.5" width="4" height="1.7" fill="#e8e8e8"/>
<rect x="26" y="178.5" width="4" height="1.7" fill="#e8e8e8"/>
<rect x="930" y="178.5" width="4" height="1.7" fill="#e8e8e8"/>
<rect x="26" y="190.5" width="4" height="1.7" fill="#e8e8e8"/>
<rect x="930" y="190.5" width="4" height="1.7" fill="#e8e8e8"/>
<rect x="26" y="202.5" width="6" height="1.7" fill="#e8e8e8"/>
<rect x="928" y="202.5" width="6" height="1.7" fill="#e8e8e8"/>
<rect x="26" y="214.5" width="4" height="1.7" fill="#e8e8e8"/>
<rect x="930" y="214.5" width="4" height="1.7" fill="#e8e8e8"/>
<rect x="26" y="226.5" width="4" height="1.7" fill="#e8e8e8"/>
<rect x="930" y="226.5" width="4" height="1.7" fill="#e8e8e8"/>
<rect x="26" y="238.5" width="4" height="1.7" fill="#e8e8e8"/>
<rect x="930" y="238.5" width="4" height="1.7" fill="#e8e8e8"/>
<rect x="26" y="250.5" width="4" height="1.7" fill="#e8e8e8"/>
<rect x="930" y="250.5" width="4" height="1.7" fill="#e8e8e8"/>
<rect x="26" y="262.4" width="6" height="1.7" fill="#e8e8e8"/>
<rect x="928" y="262.4" width="6" height="1.7" fill="#e8e8e8"/>
<rect x="26" y="274.4" width="4" height="1.7" fill="#e8e8e8"/>
<rect x="930" y="274.4" width="4" height="1.7" fill="#e8e8e8"/>
<rect x="26" y="286.4" width="4" height="1.7" fill="#e8e8e8"/>
<rect x="930" y="286.4" width="4" height="1.7" fill="#e8e8e8"/>
<rect x="26" y="298.4" width="4" height="1.7" fill="#e8e8e8"/>
<rect x="930" y="298.4" width="4" height="1.7" fill="#e8e8e8"/>
<rect x="26" y="310.4" width="4" height="1.7" fill="#e8e8e8"/>
<rect x="930" y="310.4" width="4" height="1.7" fill="#e8e8e8"/>
<rect x="26" y="322.4" width="6" height="1.7" fill="#e8e8e8"/>
<rect x="928" y="322.4" width="6" height="1.7" fill="#e8e8e8"/>
<rect x="26" y="334.4" width="4" height="1.7" fill="#e8e8e8"/>
<rect x="930" y="334.4" width="4" height="1.7" fill="#e8e8e8"/>
<rect x="26" y="346.4" width="4" height="1.7" fill="#e8e8e8"/>
<rect x="930" y="346.4" width="4" height="1.7" fill="#e8e8e8"/>
<rect x="26" y="358.4" width="4" height="1.7" fill="#e8e8e8"/>
<rect x="930" y="358.4" width="4" height="1.7" fill="#e8e8e8"/>
<rect x="26" y="370.4" width="4" height="1.7" fill="#e8e8e8"/>
<rect x="930" y="370.4" width="4" height="1.7" fill="#e8e8e8"/>
<rect x="26" y="382.4" width="6" height="1.7" fill="#e8e8e8"/>
<rect x="928" y="382.4" width="6" height="1.7" fill="#e8e8e8"/>
<rect x="26" y="394.4" width="4" height="1.7" fill="#e8e8e8"/>
<rect x="930" y="394.4" width="4" height="1.7" fill="#e8e8e8"/>
<rect x="26" y="406.4" width="4" height="1.7" fill="#e8e8e8"/>
<rect x="930" y="406.4" width="4" height="1.7" fill="#e8e8e8"/>
<rect x="26" y="418.4" width="4" height="1.7" fill="#e8e8e8"/>
<rect x="930" y="418.4" width="4" height="1.7" fill="#e8e8e8"/>
<rect x="26" y="430.4" width="4" height="1.7" fill="#e8e8e8"/>
<rect x="930" y="430.4" width="4" height="1.7" fill="#e8e8e8"/>
<rect x="26" y="442.4" width="6" height="1.7" fill="#e8e8e8"/>
<rect x="928" y="442.4" width="6" height="1.7" fill="#e8e8e8"/>
<rect x="26" y="454.4" width="4" height="1.7" fill="#e8e8e8"/>
<rect x="930" y="454.4" width="4" height="1.7" fill="#e8e8e8"/>
<rect x="26" y="466.4" width="4" height="1.7" fill="#e8e8e8"/>
<rect x="930" y="466.4" width="4" height="1.7" fill="#e8e8e8"/>
<rect x="26" y="478.4" width="4" height="1.7" fill="#e8e8e8"/>
<rect x="930" y="478.4" width="4" height="1.7" fill="#e8e8e8"/>
<rect x="26" y="490.4" width="4" height="1.7" fill="#e8e8e8"/>
<rect x="930" y="490.4" width="4" height="1.7" fill="#e8e8e8"/>
<rect x="26" y="502.4" width="6" height="1.7" fill="#e8e8e8"/>
<rect x="928" y="502.4" width="6" height="1.7" fill="#e8e8e8"/>
<rect x="26" y="514.4" width="4" height="1.7" fill="#e8e8e8"/>
<rect x="930" y="514.4" width="4" height="1.7" fill="#e8e8e8"/>
<rect x="26" y="526.4" width="4" height="1.7" fill="#e8e8e8"/>
<rect x="930" y="526.4" width="4" height="1.7" fill="#e8e8e8"/>
<rect x="26" y="538.4" width="4" height="1.7" fill="#e8e8e8"/>
<rect x="930" y="538.4" width="4" height="1.7" fill="#e8e8e8"/>
<rect x="26" y="550.4" width="4" height="1.7" fill="#e8e8e8"/>
<rect x="930" y="550.4" width="4" height="1.7" fill="#e8e8e8"/>
<rect x="26" y="562.4" width="6" height="1.7" fill="#e8e8e8"/>
<rect x="928" y="562.4" width="6" height="1.7" fill="#e8e8e8"/>
<rect x="26" y="574.4" width="4" height="1.7" fill="#e8e8e8"/>
<rect x="930" y="574.4" width="4" height="1.7" fill="#e8e8e8"/>
<rect x="26" y="586.4" width="4" height="1.7" fill="#e8e8e8"/>
<rect x="930" y="586.4" width="4" height="1.7" fill="#e8e8e8"/>
<rect x="26" y="598.4" width="4" height="1.7" fill="#e8e8e8"/>
<rect x="930" y="598.4" width="4" height="1.7" fill="#e8e8e8"/>
<rect x="26" y="610.4" width="4" height="1.7" fill="#e8e8e8"/>
<rect x="930" y="610.4" width="4" height="1.7" fill="#e8e8e8"/>
<rect x="26.00" y="322.65" width="46.00" height="2.20" fill="#f2f200"/>
<rect x="86.00" y="286.05" width="135.00" height="2.70" fill="#f2f200"/>
<rect x="283.00" y="284.90" width="57.00" height="3.20" fill="#f2f200"/>
<rect x="403.50" y="285.35" width="112.50" height="3.30" fill="#f2f200"/>
<rect x="574.50" y="287.55" width="33.00" height="2.90" fill="#f2f200"/>
<rect x="606.50" y="284.75" width="202.50" height="3.30" fill="#f2f200"/>
<rect x="807.00" y="322.45" width="127.00" height="2.50" fill="#f2f200"/>
<rect x="70.10" y="127.50" width="2.20" height="197.50" fill="#f2f200"/>
<rect x="283.20" y="236.00" width="1.70" height="52.00" fill="#f2f200"/>
<rect x="404.00" y="244.00" width="1.70" height="44.00" fill="#f2f200"/>
<rect x="574.60" y="260.00" width="1.70" height="30.00" fill="#f2f200"/>
<rect x="807.40" y="285.00" width="1.70" height="40.00" fill="#f2f200"/>
<rect x="70.00" y="128.30" width="8.00" height="4.50" fill="#f2f200"/>
<path d="M76.50,130.50 L79.20,124.80 L81.00,128.00" fill="none" stroke="#f2f200" stroke-width="2.4" stroke-linejoin="round" stroke-linecap="butt"/>
<path d="M80.80,126.00 L80.80,161.70 L82.50,164.00 L83.20,168.50 L84.50,172.00 L87.20,261.00 L88.10,265.00 L88.50,289.00" fill="none" stroke="#f2f200" stroke-width="1.8" stroke-linejoin="round" stroke-linecap="butt"/>
<path d="M219.00,287.40 L227.00,278.00 L239.70,262.20 L250.80,247.60 L259.90,235.80 L267.50,227.20 L270.00,226.00 L277.90,226.00 L280.00,230.30 L282.80,237.20 L284.00,240.00" fill="none" stroke="#f2f200" stroke-width="3.0" stroke-linejoin="round" stroke-linecap="butt"/>
<path d="M338.00,286.50 L346.10,276.70 L357.20,262.20 L368.30,247.80 L379.40,232.80 L385.00,225.60 L389.40,221.10 L392.80,219.50 L397.20,222.20 L400.60,229.40 L402.20,237.80 L404.40,246.00" fill="none" stroke="#f2f200" stroke-width="3.0" stroke-linejoin="round" stroke-linecap="butt"/>
<path d="M514.00,287.50 L518.30,283.30 L522.50,279.20 L529.20,274.20 L535.00,268.30 L543.30,262.50 L550.00,256.70 L555.80,250.40 L561.70,247.90 L568.30,247.50 L571.70,250.00 L573.75,255.00 L575.20,262.50" fill="none" stroke="#f2f200" stroke-width="3.0" stroke-linejoin="round" stroke-linecap="butt"/>
<rect x="274.30" y="217.00" width="1.60" height="8.00" fill="#e8e860"/>
<rect x="369.20" y="236.70" width="1.60" height="9.30" fill="#e8e860"/>
<rect x="549.60" y="258.00" width="1.60" height="7.00" fill="#e8e860"/>
<rect x="562.50" y="248.00" width="1.60" height="7.00" fill="#e8e860"/>
<rect x="565.00" y="243.00" width="1.60" height="4.00" fill="#e8e860"/>
<rect x="519.20" y="275.00" width="1.60" height="6.00" fill="#e8e860"/>
<rect x="30.98" y="319.45" width="1.50" height="3.00" fill="#ecec50"/>
<rect x="33.73" y="325.05" width="1.50" height="1.50" fill="#ecec50"/>
<rect x="38.76" y="318.45" width="1.50" height="4.00" fill="#ecec50"/>
<rect x="42.71" y="319.45" width="1.50" height="3.00" fill="#ecec50"/>
<rect x="45.61" y="319.45" width="1.50" height="3.00" fill="#ecec50"/>
<rect x="48.44" y="325.05" width="1.50" height="2.00" fill="#ecec50"/>
<rect x="55.38" y="325.05" width="1.50" height="1.50" fill="#ecec50"/>
<rect x="61.93" y="320.45" width="1.50" height="2.00" fill="#ecec50"/>
<rect x="64.67" y="325.05" width="1.50" height="2.50" fill="#ecec50"/>
<rect x="98.69" y="289.10" width="1.50" height="4.00" fill="#ecec50"/>
<rect x="111.10" y="281.70" width="1.50" height="4.00" fill="#ecec50"/>
<rect x="120.87" y="284.20" width="1.50" height="1.50" fill="#ecec50"/>
<rect x="130.39" y="284.20" width="1.50" height="1.50" fill="#ecec50"/>
<rect x="140.67" y="281.70" width="1.50" height="4.00" fill="#ecec50"/>
<rect x="148.89" y="281.70" width="1.50" height="4.00" fill="#ecec50"/>
<rect x="162.46" y="283.70" width="1.50" height="2.00" fill="#ecec50"/>
<rect x="174.64" y="289.10" width="1.50" height="2.00" fill="#ecec50"/>
<rect x="179.13" y="282.70" width="1.50" height="3.00" fill="#ecec50"/>
<rect x="192.18" y="289.10" width="1.50" height="2.50" fill="#ecec50"/>
<rect x="202.36" y="281.70" width="1.50" height="4.00" fill="#ecec50"/>
<rect x="210.47" y="289.10" width="1.50" height="2.00" fill="#ecec50"/>
<rect x="294.40" y="288.60" width="1.50" height="1.50" fill="#ecec50"/>
<rect x="306.26" y="288.60" width="1.50" height="2.50" fill="#ecec50"/>
<rect x="313.54" y="281.40" width="1.50" height="3.00" fill="#ecec50"/>
<rect x="323.40" y="282.90" width="1.50" height="1.50" fill="#ecec50"/>
<rect x="415.94" y="289.20" width="1.50" height="1.50" fill="#ecec50"/>
<rect x="428.71" y="280.80" width="1.50" height="4.00" fill="#ecec50"/>
<rect x="444.63" y="289.20" width="1.50" height="2.50" fill="#ecec50"/>
<rect x="457.23" y="289.20" width="1.50" height="2.50" fill="#ecec50"/>
<rect x="461.50" y="282.80" width="1.50" height="2.00" fill="#ecec50"/>
<rect x="472.83" y="282.80" width="1.50" height="2.00" fill="#ecec50"/>
<rect x="486.05" y="282.80" width="1.50" height="2.00" fill="#ecec50"/>
<rect x="494.83" y="289.20" width="1.50" height="3.00" fill="#ecec50"/>
<rect x="499.79" y="280.80" width="1.50" height="4.00" fill="#ecec50"/>
<rect x="507.13" y="281.80" width="1.50" height="3.00" fill="#ecec50"/>
<rect x="583.12" y="284.70" width="1.50" height="2.50" fill="#ecec50"/>
<rect x="592.88" y="285.20" width="1.50" height="2.00" fill="#ecec50"/>
<rect x="597.53" y="285.20" width="1.50" height="2.00" fill="#ecec50"/>
<rect x="611.57" y="288.60" width="1.50" height="2.00" fill="#ecec50"/>
<rect x="617.29" y="281.20" width="1.50" height="3.00" fill="#ecec50"/>
<rect x="625.62" y="288.60" width="1.50" height="2.50" fill="#ecec50"/>
<rect x="637.97" y="288.60" width="1.50" height="4.00" fill="#ecec50"/>
<rect x="650.29" y="288.60" width="1.50" height="1.50" fill="#ecec50"/>
<rect x="657.88" y="288.60" width="1.50" height="4.00" fill="#ecec50"/>
<rect x="664.84" y="282.70" width="1.50" height="1.50" fill="#ecec50"/>
<rect x="672.67" y="282.20" width="1.50" height="2.00" fill="#ecec50"/>
<rect x="676.51" y="282.20" width="1.50" height="2.00" fill="#ecec50"/>
<rect x="680.77" y="288.60" width="1.50" height="1.50" fill="#ecec50"/>
<rect x="683.97" y="282.70" width="1.50" height="1.50" fill="#ecec50"/>
<rect x="696.28" y="288.60" width="1.50" height="1.50" fill="#ecec50"/>
<rect x="707.87" y="288.60" width="1.50" height="2.00" fill="#ecec50"/>
<rect x="717.16" y="288.60" width="1.50" height="4.00" fill="#ecec50"/>
<rect x="723.86" y="281.20" width="1.50" height="3.00" fill="#ecec50"/>
<rect x="736.59" y="281.20" width="1.50" height="3.00" fill="#ecec50"/>
<rect x="742.79" y="278.20" width="1.50" height="6.00" fill="#ecec50"/>
<rect x="749.28" y="278.20" width="1.50" height="6.00" fill="#ecec50"/>
<rect x="754.03" y="280.20" width="1.50" height="4.00" fill="#ecec50"/>
<rect x="760.70" y="288.60" width="1.50" height="1.50" fill="#ecec50"/>
<rect x="771.18" y="278.20" width="1.50" height="6.00" fill="#ecec50"/>
<rect x="782.66" y="288.60" width="1.50" height="2.50" fill="#ecec50"/>
<rect x="790.84" y="288.60" width="1.50" height="2.50" fill="#ecec50"/>
<rect x="801.45" y="288.60" width="1.50" height="4.00" fill="#ecec50"/>
<rect x="814.26" y="325.20" width="1.50" height="2.00" fill="#ecec50"/>
<rect x="822.46" y="325.20" width="1.50" height="2.00" fill="#ecec50"/>
<rect x="826.30" y="319.70" width="1.50" height="2.50" fill="#ecec50"/>
<rect x="828.91" y="319.70" width="1.50" height="2.50" fill="#ecec50"/>
<rect x="834.71" y="318.20" width="1.50" height="4.00" fill="#ecec50"/>
<rect x="843.99" y="319.70" width="1.50" height="2.50" fill="#ecec50"/>
<rect x="853.51" y="325.20" width="1.50" height="2.50" fill="#ecec50"/>
<rect x="856.49" y="319.20" width="1.50" height="3.00" fill="#ecec50"/>
<rect x="860.30" y="318.20" width="1.50" height="4.00" fill="#ecec50"/>
<rect x="869.80" y="325.20" width="1.50" height="1.50" fill="#ecec50"/>
<rect x="875.65" y="325.20" width="1.50" height="1.50" fill="#ecec50"/>
<rect x="884.06" y="319.20" width="1.50" height="3.00" fill="#ecec50"/>
<rect x="892.09" y="325.20" width="1.50" height="3.00" fill="#ecec50"/>
<rect x="900.89" y="319.70" width="1.50" height="2.50" fill="#ecec50"/>
<rect x="905.69" y="325.20" width="1.50" height="3.00" fill="#ecec50"/>
<rect x="911.42" y="325.20" width="1.50" height="1.50" fill="#ecec50"/>
<rect x="919.04" y="320.20" width="1.50" height="2.00" fill="#ecec50"/>
<rect x="921.64" y="325.20" width="1.50" height="3.00" fill="#ecec50"/>
<rect x="929.85" y="318.20" width="1.50" height="4.00" fill="#ecec50"/>
<rect x="223.56" y="277.42" width="1.40" height="2.50" fill="#ecec50"/>
<rect x="222.69" y="279.45" width="1.40" height="1.50" fill="#ecec50"/>
<rect x="238.63" y="263.96" width="1.40" height="1.50" fill="#ecec50"/>
<rect x="238.16" y="264.55" width="1.40" height="3.00" fill="#ecec50"/>
<rect x="228.77" y="271.62" width="1.40" height="2.00" fill="#ecec50"/>
<rect x="229.00" y="275.94" width="1.40" height="2.00" fill="#ecec50"/>
<rect x="242.62" y="258.74" width="1.40" height="3.00" fill="#ecec50"/>
<rect x="239.68" y="262.61" width="1.40" height="2.50" fill="#ecec50"/>
<rect x="246.35" y="253.83" width="1.40" height="3.00" fill="#ecec50"/>
<rect x="248.75" y="250.68" width="1.40" height="2.00" fill="#ecec50"/>
<rect x="254.86" y="242.72" width="1.40" height="1.50" fill="#ecec50"/>
<rect x="257.17" y="239.74" width="1.40" height="1.50" fill="#ecec50"/>
<rect x="251.46" y="242.53" width="1.40" height="2.00" fill="#ecec50"/>
<rect x="264.71" y="226.76" width="1.40" height="1.50" fill="#ecec50"/>
<rect x="263.14" y="232.64" width="1.40" height="3.00" fill="#ecec50"/>
<rect x="338.16" y="282.66" width="1.40" height="1.50" fill="#ecec50"/>
<rect x="339.54" y="285.09" width="1.40" height="1.50" fill="#ecec50"/>
<rect x="351.64" y="265.75" width="1.40" height="1.50" fill="#ecec50"/>
<rect x="352.20" y="269.12" width="1.40" height="2.00" fill="#ecec50"/>
<rect x="350.42" y="271.44" width="1.40" height="3.00" fill="#ecec50"/>
<rect x="348.15" y="274.41" width="1.40" height="2.50" fill="#ecec50"/>
<rect x="366.41" y="250.64" width="1.40" height="2.00" fill="#ecec50"/>
<rect x="358.02" y="257.43" width="1.40" height="1.50" fill="#ecec50"/>
<rect x="360.01" y="254.35" width="1.40" height="2.00" fill="#ecec50"/>
<rect x="369.96" y="245.91" width="1.40" height="2.50" fill="#ecec50"/>
<rect x="377.56" y="235.64" width="1.40" height="2.00" fill="#ecec50"/>
<rect x="374.74" y="234.35" width="1.40" height="2.50" fill="#ecec50"/>
<rect x="377.40" y="230.26" width="1.40" height="3.00" fill="#ecec50"/>
<rect x="384.03" y="227.24" width="1.40" height="3.00" fill="#ecec50"/>
<rect x="379.61" y="228.33" width="1.40" height="2.00" fill="#ecec50"/>
<rect x="515.16" y="281.39" width="1.40" height="3.00" fill="#ecec50"/>
<rect x="518.42" y="278.70" width="1.40" height="2.50" fill="#ecec50"/>
<rect x="524.25" y="278.67" width="1.40" height="2.50" fill="#ecec50"/>
<rect x="531.05" y="268.80" width="1.40" height="1.50" fill="#ecec50"/>
<rect x="538.59" y="266.60" width="1.40" height="2.50" fill="#ecec50"/>
<rect x="534.83" y="269.23" width="1.40" height="2.00" fill="#ecec50"/>
<rect x="543.30" y="258.09" width="1.40" height="2.50" fill="#ecec50"/>
<rect x="554.55" y="247.69" width="1.40" height="2.00" fill="#ecec50"/>
</svg>
<svg class="a" style="left:0;top:312px" width="26" height="24"><path d="M0.7,1.2 H16.5 L23,12 L16.5,22.6 H0.7 Z" fill="#000" stroke="#e0e020" stroke-width="1.3"/><text x="4.3" y="18.4" font-family="Liberation Sans" font-size="17.5" fill="#e0e020">2</text></svg>

<!-- bottom -->
<div class="a" style="left:0;top:623px;width:382px;height:97px;background:#68b0c4"></div>
<div class="a" style="left:382px;top:645.7px;width:576px;height:70.5px;background:#0262a2"></div>
<div class="pill" style="left:1px;top:624px;width:248.5px;height:21.8px;border-radius:5px"></div>
<div class="a" style="left:1px;top:646px;width:248px;height:2px;background:#2f6888"></div>
<div class="pill" style="left:1px;top:648px;width:248.5px;height:22.5px;border-radius:5px"></div>
<div class="pill" style="left:253.5px;top:623.7px;width:126.5px;height:46.3px;border-radius:6px"></div>
<div class="pill" style="left:1px;top:673.3px;width:378.5px;height:43.5px;border-radius:6px"></div>
<div class="a" style="left:382px;top:623px;width:574px;height:22.5px;background:#0080e0"></div>
<div class="pill" style="left:383px;top:624px;width:118px;height:20.5px;border-radius:10px"></div>
<div class="pill" style="left:798px;top:623.8px;width:154px;height:21.2px;border-radius:10.5px"></div>

<div class="a" style="left:382px;top:645px;width:113px;height:71.5px;background:#0a72d2"></div>
<div class="a" style="left:387px;top:648.5px;width:108px;height:67px;background:#0848a8;border-radius:2px"></div>
<div class="a" style="left:387px;top:648.6px;width:105px;height:64.7px;background:#48a2f2;border-radius:2px 2px 0 0"></div>
<div class="a" style="left:388.3px;top:650px;width:103.7px;height:63.3px;background:#0484ea"></div>
<div class="a" style="left:715.5px;top:648px;width:109px;height:67.5px;background:#0848a8;border-radius:2px"></div>
<div class="a" style="left:717px;top:649.4px;width:106px;height:64.6px;background:#48a2f2;border-radius:2px 2px 0 0"></div>
<div class="a" style="left:718.3px;top:650.8px;width:104.7px;height:63.2px;background:#0484ea"></div>
<svg class="a" style="left:0;top:620px" width="960" height="100" viewBox="0 620 960 100">
<g font-family="Liberation Sans" font-size="15" text-anchor="middle" font-weight="bold">
<circle cx="12.2" cy="636" r="9.6" fill="#f00000"/><path d="M9.4,633.6 L13,631.2 V640.6" fill="none" stroke="#000" stroke-width="2.2"/>
<circle cx="12.3" cy="660" r="9.7" fill="#e8e800"/><text x="12.1" y="665.5" fill="#000" font-size="16">2</text>
<circle cx="11.5" cy="683.9" r="9.6" fill="#e8e800"/><text x="11.2" y="689.6" fill="#000" font-size="16">2</text>
<circle cx="11.5" cy="706.8" r="9.6" fill="#e8e800"/><text x="11.2" y="712.5" fill="#000" font-size="16">2</text>
<circle cx="201.8" cy="684.5" r="9.3" fill="#e8e800"/><text x="201.6" y="690.2" fill="#000" font-size="16">2</text>
<circle cx="201.8" cy="706.2" r="9.3" fill="#e8e800"/><text x="201.6" y="711.9" fill="#000" font-size="16">2</text>
<circle cx="810.6" cy="634.3" r="9.4" fill="#f00000"/><path d="M807.8,632 L811.4,629.5 V640" fill="none" stroke="#000" stroke-width="2.2"/>
</g>
<path d="M822,642.3 H832 L838,626.8 H845.8" fill="none" stroke="#e0e0e0" stroke-width="1.6"/>
</svg>
<div class="a" style="left:409.2px;top:685px;width:60px;height:23.75px;background:#e4e4e4"></div>
<div id="aktakom" class="t" style="left:27.46px;top:4.20px;color:#0a1e50"><span style="transform:scaleX(0.773)">A</span><span style="transform:scaleX(0.773)">K</span><span style="transform:scaleX(0.913)">T</span><span style="transform:scaleX(0.773)">A</span><span style="transform:scaleX(0.773)">K</span><span style="transform:scaleX(0.773)">O</span><span style="transform:scaleX(0.628)">M</span></div>
<div id="stop" class="t" style="left:167.07px;top:2.38px;color:#500000"><span>S</span><span>t</span><span>o</span><span>p</span></div>
<div id="tdelay" class="t" style="left:693.01px;top:3.29px;color:#e8e8e8"><span>2</span><span>.</span><span>4</span><span>0</span><span>0</span><span>s</span></div>
<div id="clock" class="t" style="left:830.22px;top:3.22px;color:#e8e8e8"><span>4</span><span>:</span><span>2</span><span>5</span></div>
<div id="ch1v" class="t" style="left:20.68px;top:627.30px;color:#d02020"><span>5</span><span style="transform:scaleX(0.773)">V</span><span>-</span></div>
<div id="ch1d" class="t" style="left:125.22px;top:627.72px;color:#d02020"><span>0</span><span>.</span><span>0</span><span>0</span><span>d</span><span>i</span><span>v</span></div>
<div id="ch2v" class="t" style="left:20.98px;top:652.70px;color:#dcdc38"><span>2</span><span style="transform:scaleX(0.773)">V</span><span>-</span></div>
<div id="ch2d" class="t" style="left:125.94px;top:652.10px;color:#dcdc38"><span>0</span><span>.</span><span>0</span><span>0</span><span>d</span><span>i</span><span>v</span></div>
<div id="rate" class="t" style="left:268.39px;top:625.40px;color:#e0e0e0"><span>(</span><span>5</span><span>0</span><span>0</span><span>S</span><span>/</span><span>s</span><span>)</span></div>
<div id="depth" class="t" style="left:261.15px;top:651.00px;color:#e0e0e0"><span style="transform:scaleX(0.773)">D</span><span>e</span><span>p</span><span>t</span><span>h</span><span>:</span><span>1</span><span>0</span><span style="transform:scaleX(0.773)">K</span></div>
<div id="freq" class="t" style="left:24.83px;top:675.00px;color:#dcdc38"><span>F</span><span>:</span><span>&nbsp;</span><span>&nbsp;</span><span>?</span></div>
<div id="duty" class="t" style="left:24.20px;top:698.20px;color:#dcdc38"><span style="transform:scaleX(0.989)">+</span><span style="transform:scaleX(0.773)">D</span><span>:</span><span>9</span><span>.</span><span>0</span><span style="transform:scaleX(0.670)">%</span></div>
<div id="vk" class="t" style="left:215.53px;top:674.40px;color:#dcdc38"><span style="transform:scaleX(0.773)">V</span><span>k</span><span>:</span><span>1</span><span>.</span><span>6</span><span>4</span><span>7</span><span>v</span></div>
<div id="vv" class="t" style="left:215.13px;top:697.60px;color:#dcdc38"><span style="transform:scaleX(0.773)">V</span><span>:</span><span>1</span><span>.</span><span>3</span><span>0</span><span>3</span><span>v</span></div>
<div id="mtime" class="t" style="left:401.93px;top:625.80px;color:#e0e0e0"><span style="transform:scaleX(0.628)">M</span><span>:</span><span>1</span><span>.</span><span>0</span><span>s</span></div>
<div id="trig" class="t" style="left:847.22px;top:626.72px;color:#e0e0e0"><span>0</span><span>.</span><span>0</span><span>0</span><span style="transform:scaleX(0.717)">m</span><span style="transform:scaleX(0.773)">V</span></div>
<div id="type" class="t" style="left:413.79px;top:659.50px;color:#0a2060"><span style="transform:scaleX(0.913)">T</span><span>y</span><span>p</span><span>e</span></div>
<div id="image" class="t" style="left:407.94px;top:688.20px;color:#000000"><span>I</span><span style="transform:scaleX(0.717)">m</span><span>a</span><span>g</span><span>e</span></div>
<div id="save" class="t" style="left:743.84px;top:673.28px;color:#102870"><span>S</span><span>a</span><span>v</span><span>e</span></div>
</body></html>
